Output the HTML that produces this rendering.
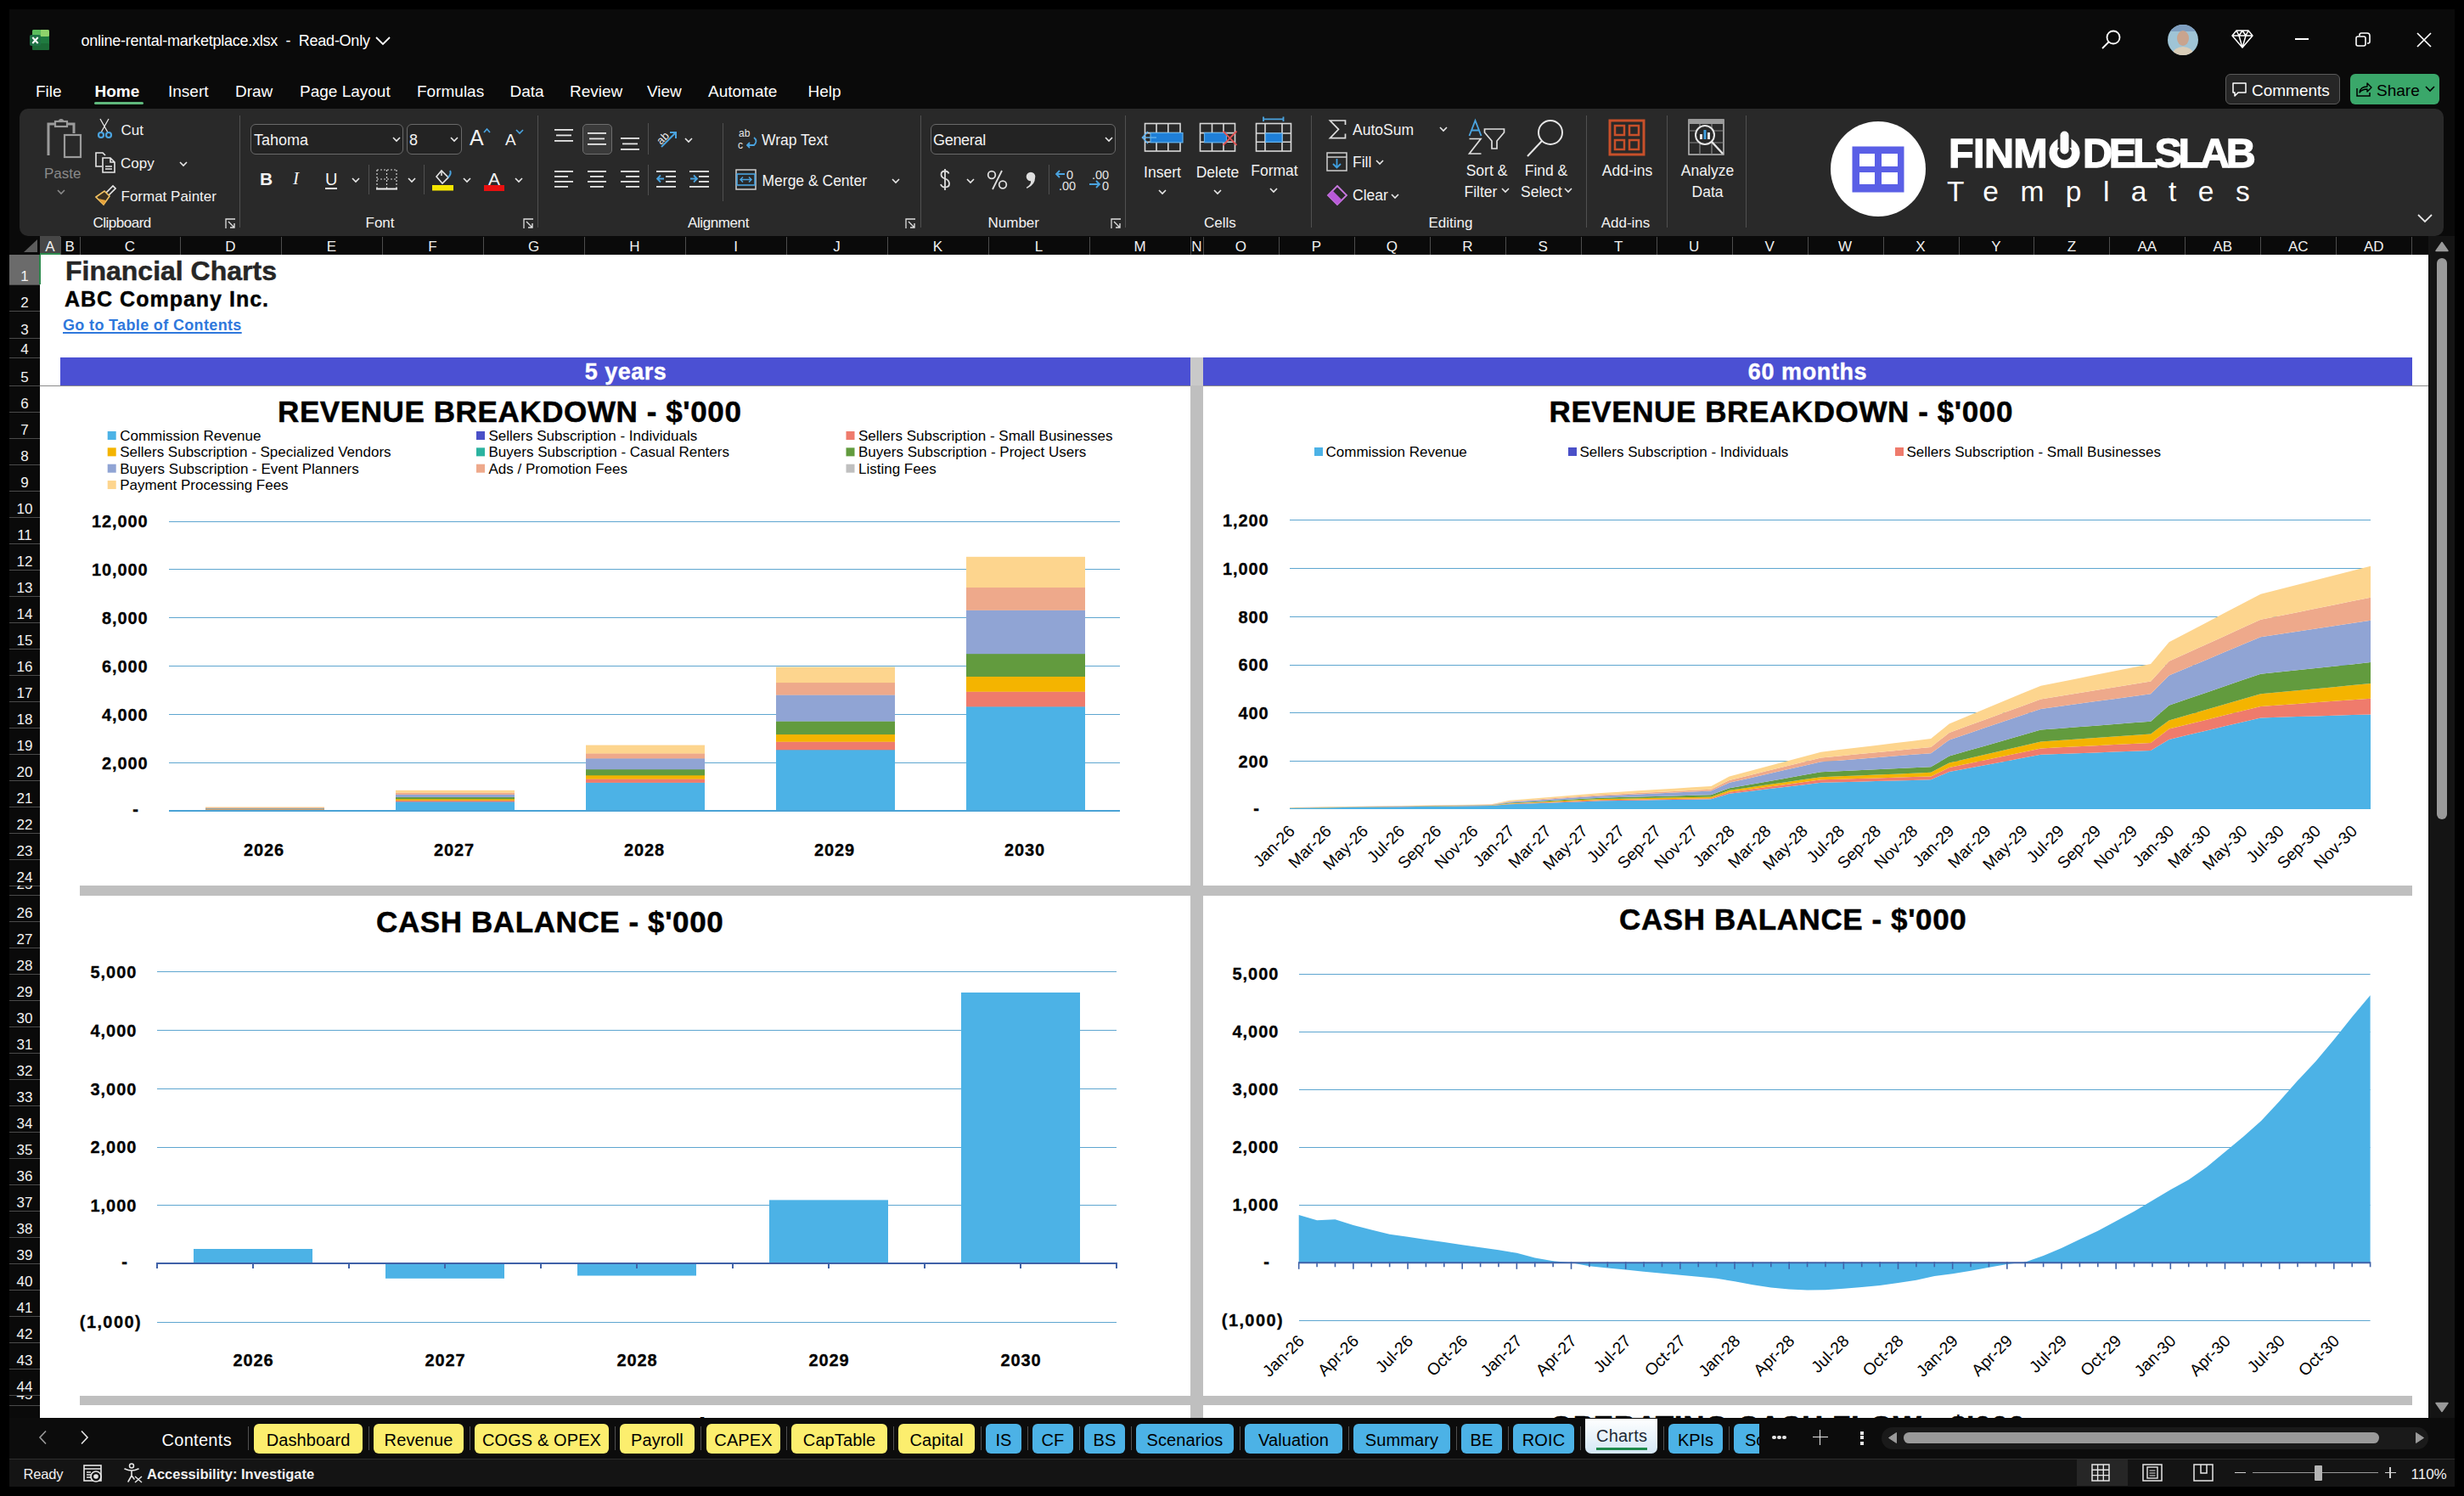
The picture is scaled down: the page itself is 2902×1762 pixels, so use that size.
<!DOCTYPE html><html><head><meta charset="utf-8"><style>
*{box-sizing:border-box}
html,body{margin:0;padding:0}
body{width:2902px;height:1762px;background:#000;position:relative;overflow:hidden;font-family:"Liberation Sans",sans-serif;color:#fff}
.a{position:absolute}
.t{position:absolute;white-space:pre;line-height:1}
</style></head><body><div class="a" style="left:11px;top:11px;width:2880px;height:1740px;background:#0a0a0a"></div>
<svg class="a" style="left:35px;top:35px" width="24" height="24" viewBox="0 0 24 24">
<rect x="3" y="0" width="20" height="24" rx="2" fill="#1f7a3f"/>
<rect x="12" y="0" width="11" height="8" rx="1.5" fill="#8fd36b"/>
<rect x="3" y="0" width="10" height="8" rx="1.5" fill="#5bbd5d"/>
<rect x="3" y="16" width="20" height="8" rx="1.5" fill="#1b6a36"/>
<rect x="0" y="6" width="13" height="13" rx="2" fill="#1e7145"/>
<path d="M3.3 9 L9.7 16 M9.7 9 L3.3 16" stroke="#fff" stroke-width="2"/>
</svg>
<div class="t" style="left:95.5px;top:38.8px;font-size:18px;color:#fff;font-weight:400;letter-spacing:-0.25px">online-rental-marketplace.xlsx&nbsp;&nbsp;-&nbsp;&nbsp;Read-Only</div>
<svg class="a" style="left:441px;top:42px" width="20" height="12"><path d="M2 2 L10 10 L18 2" stroke="#fff" stroke-width="1.8" fill="none"/></svg>
<svg class="a" style="left:2473px;top:34px" width="26" height="26"><circle cx="16" cy="10" r="7.5" stroke="#fff" stroke-width="1.8" fill="none"/><path d="M10.5 15.5 L3 23" stroke="#fff" stroke-width="1.8"/></svg>
<svg class="a" style="left:2553px;top:29px" width="36" height="36" viewBox="0 0 36 36">
<defs><clipPath id="av"><circle cx="18" cy="18" r="18"/></clipPath></defs>
<g clip-path="url(#av)"><rect width="36" height="36" fill="#9fc4d6"/><rect y="0" width="36" height="8" fill="#7f9fc0"/>
<ellipse cx="18" cy="16" rx="7" ry="9" fill="#c9a48e"/><path d="M4 36 Q8 26 18 26 Q28 26 32 36Z" fill="#d9cdb8"/></g></svg>
<svg class="a" style="left:2628px;top:34px" width="26" height="24"><path d="M6 2 H20 L25 8 L13 22 L1 8 Z M1 8 H25 M9 8 L13 22 L17 8 M6 2 L9 8 L13 2 L17 8 L20 2" stroke="#fff" stroke-width="1.5" fill="none" stroke-linejoin="round"/></svg>
<div class="a" style="left:2703px;top:45px;width:16px;height:2px;background:#fff"></div>
<svg class="a" style="left:2774px;top:38px" width="18" height="18"><rect x="1" y="5" width="11" height="11" rx="2" stroke="#fff" stroke-width="1.6" fill="none"/><path d="M5 4 V3 Q5 1 7 1 H14 Q17 1 17 4 V11 Q17 13 15 13 H14" stroke="#fff" stroke-width="1.6" fill="none"/></svg>
<svg class="a" style="left:2846px;top:38px" width="18" height="18"><path d="M1 1 L17 17 M17 1 L1 17" stroke="#fff" stroke-width="1.7"/></svg>
<div class="t" style="left:42px;top:97.9px;font-size:19px;color:#fff;font-weight:400;">File</div>
<div class="t" style="left:111.5px;top:97.9px;font-size:19px;color:#fff;font-weight:700;">Home</div>
<div class="t" style="left:198px;top:97.9px;font-size:19px;color:#fff;font-weight:400;">Insert</div>
<div class="t" style="left:277px;top:97.9px;font-size:19px;color:#fff;font-weight:400;">Draw</div>
<div class="t" style="left:353px;top:97.9px;font-size:19px;color:#fff;font-weight:400;">Page Layout</div>
<div class="t" style="left:491px;top:97.9px;font-size:19px;color:#fff;font-weight:400;">Formulas</div>
<div class="t" style="left:600.5px;top:97.9px;font-size:19px;color:#fff;font-weight:400;">Data</div>
<div class="t" style="left:671px;top:97.9px;font-size:19px;color:#fff;font-weight:400;">Review</div>
<div class="t" style="left:762px;top:97.9px;font-size:19px;color:#fff;font-weight:400;">View</div>
<div class="t" style="left:834px;top:97.9px;font-size:19px;color:#fff;font-weight:400;">Automate</div>
<div class="t" style="left:951.5px;top:97.9px;font-size:19px;color:#fff;font-weight:400;">Help</div>
<div class="a" style="left:111px;top:120px;width:58px;height:3px;background:#5fb87c;border-radius:2px"></div>
<div class="a" style="left:2621px;top:87px;width:135px;height:36px;border:1px solid #5a5a5a;border-radius:6px;background:#262626"></div>
<svg class="a" style="left:2628px;top:96px" width="20" height="20"><path d="M2 2 H17 V13 H8 L4 17 V13 H2 Z" stroke="#fff" stroke-width="1.5" fill="none" stroke-linejoin="round"/></svg>
<div class="t" style="left:2652px;top:96.9px;font-size:19px;color:#fff;font-weight:400;">Comments</div>
<div class="a" style="left:2768px;top:87px;width:105px;height:36px;border-radius:6px;background:#3aa76a"></div>
<svg class="a" style="left:2774px;top:95px" width="20" height="20"><path d="M2 9 V18 H17 V14" stroke="#000" stroke-width="1.5" fill="none"/><path d="M5 14 Q6 7 14 7 V3 L19 8 L14 13 V10 Q8 10 5 14Z" stroke="#000" stroke-width="1.4" fill="none" stroke-linejoin="round"/></svg>
<div class="t" style="left:2799px;top:96.9px;font-size:19px;color:#000;font-weight:400;">Share</div>
<svg class="a" style="left:2856px;top:101px" width="12" height="8"><path d="M1 1 L6 6 L11 1" stroke="#000" stroke-width="1.6" fill="none"/></svg>
<div class="a" style="left:23px;top:128px;width:2855px;height:150px;background:#292929;border-radius:10px"></div>
<svg class="a" style="left:54px;top:140px" width="44" height="48" viewBox="0 0 44 48"><path d="M3 43 V6 H11 M25 6 H33 V17" stroke="#9b9b9b" stroke-width="3" fill="none"/><rect x="11" y="3" width="14" height="6" fill="none" stroke="#9b9b9b" stroke-width="2.2"/><path d="M15 3 Q18 -1 21 3" stroke="#9b9b9b" stroke-width="2" fill="none"/><rect x="22" y="19" width="19" height="26" fill="none" stroke="#9b9b9b" stroke-width="2.2"/></svg>
<div class="t" style="left:52px;top:195.6px;font-size:17px;color:#8a8a8a;font-weight:400;">Paste</div>
<svg class="a" style="left:67px;top:223px" width="10" height="7" viewBox="0 0 10 7"><path d="M1 1 L5 5 L9 1" stroke="#8a8a8a" stroke-width="1.6" fill="none"/></svg>
<svg class="a" style="left:114px;top:139px" width="20" height="26" viewBox="0 0 20 26"><path d="M4 1 L13 17 M14 1 L5 17" stroke="#e6e6e6" stroke-width="1.3"/><circle cx="5" cy="20" r="3" stroke="#4aa3df" stroke-width="2.2" fill="none"/><circle cx="14" cy="20" r="3" stroke="#4aa3df" stroke-width="2.2" fill="none"/></svg>
<div class="t" style="left:142.5px;top:144.6px;font-size:17px;color:#f2f2f2;font-weight:400;">Cut</div>
<svg class="a" style="left:111px;top:178px" width="26" height="26" viewBox="0 0 26 26"><path d="M9 18 H2 V2 H10 L13 5" stroke="#e6e6e6" stroke-width="1.6" fill="none"/><path d="M10 8 H19 L24 13 V25 H10 Z M19 8 V13 H24 M13 18 H21 M13 21 H21" stroke="#e6e6e6" stroke-width="1.6" fill="none"/></svg>
<div class="t" style="left:142px;top:183.6px;font-size:17px;color:#f2f2f2;font-weight:400;">Copy</div>
<svg class="a" style="left:211px;top:190px" width="10" height="7" viewBox="0 0 10 7"><path d="M1 1 L5 5 L9 1" stroke="#e8e8e8" stroke-width="1.6" fill="none"/></svg>
<svg class="a" style="left:111px;top:217px" width="26" height="26" viewBox="0 0 26 26"><path d="M14 10 L22 2 L25 5 L17 13" stroke="#e6e6e6" stroke-width="1.7" fill="none"/><path d="M2 15 L12 8 L18 14 L11 24 Z" stroke="#f0c060" stroke-width="1.6" fill="#3a3020"/><path d="M5 17 L11 24 L14 19 Z" fill="#e8a33a"/></svg>
<div class="t" style="left:142.5px;top:222.6px;font-size:17px;color:#f2f2f2;font-weight:400;">Format Painter</div>
<div class="t" style="left:109.5px;top:253.6px;font-size:17px;color:#f2f2f2;font-weight:400;letter-spacing:-0.5px">Clipboard</div>
<svg class="a" style="left:265px;top:257px" width="13" height="13" viewBox="0 0 13 13"><path d="M1 12 V1 H12" stroke="#ddd" stroke-width="1.3" fill="none"/><path d="M4 4 L11 11 M6 11 H11 V6" stroke="#ddd" stroke-width="1.4" fill="none"/></svg>
<div class="a" style="left:282px;top:136px;width:1px;height:132px;background:#505050"></div>
<div class="a" style="left:295px;top:146px;width:180px;height:36px;border:1px solid #6a6a6a;border-radius:6px;background:#232323"></div>
<div class="t" style="left:299px;top:155.8px;font-size:18px;color:#f2f2f2;font-weight:400;">Tahoma</div>
<svg class="a" style="left:462px;top:161px" width="10" height="7" viewBox="0 0 10 7"><path d="M1 1 L5 5 L9 1" stroke="#e8e8e8" stroke-width="1.6" fill="none"/></svg>
<div class="a" style="left:479px;top:146px;width:65px;height:36px;border:1px solid #6a6a6a;border-radius:6px;background:#232323"></div>
<div class="t" style="left:482px;top:155.8px;font-size:18px;color:#f2f2f2;font-weight:400;">8</div>
<svg class="a" style="left:530px;top:161px" width="10" height="7" viewBox="0 0 10 7"><path d="M1 1 L5 5 L9 1" stroke="#e8e8e8" stroke-width="1.6" fill="none"/></svg>
<div class="t" style="left:553px;top:149.8px;font-size:25px;color:#f2f2f2;font-weight:400;">A</div>
<svg class="a" style="left:569px;top:150px" width="9" height="7" viewBox="0 0 9 7"><path d="M1 6 L4.5 2 L8 6" stroke="#4aa3df" stroke-width="1.7" fill="none"/></svg>
<div class="t" style="left:595px;top:154.9px;font-size:19px;color:#f2f2f2;font-weight:400;">A</div>
<svg class="a" style="left:607px;top:152px" width="10" height="7" viewBox="0 0 10 7"><path d="M1 1 L5 5 L9 1" stroke="#4aa3df" stroke-width="1.7" fill="none"/></svg>
<div class="t" style="left:306px;top:200.2px;font-size:21px;color:#f2f2f2;font-weight:700;">B</div>
<div class="t" style="left:345px;top:200.2px;font-size:21px;color:#f2f2f2;font-weight:400;font-style:italic;font-family:'Liberation Serif'">I</div>
<div class="t" style="left:383px;top:201.1px;font-size:20px;color:#f2f2f2;font-weight:400;">U</div>
<div class="a" style="left:383px;top:221px;width:14px;height:1.5px;background:#f2f2f2"></div>
<svg class="a" style="left:414px;top:209px" width="10" height="7" viewBox="0 0 10 7"><path d="M1 1 L5 5 L9 1" stroke="#e8e8e8" stroke-width="1.6" fill="none"/></svg>
<div class="a" style="left:434px;top:194px;width:1px;height:35px;background:#505050"></div>
<svg class="a" style="left:443px;top:199px" width="25" height="25" viewBox="0 0 25 25"><path d="M1 1 H24 M1 12 H24 M1 1 V24 M24 1 V24 M12.5 1 V24" stroke="#cfcfcf" stroke-width="1.2" stroke-dasharray="2 2" fill="none"/><path d="M0 23.5 H25" stroke="#f0f0f0" stroke-width="2"/></svg>
<svg class="a" style="left:480px;top:209px" width="10" height="7" viewBox="0 0 10 7"><path d="M1 1 L5 5 L9 1" stroke="#e8e8e8" stroke-width="1.6" fill="none"/></svg>
<div class="a" style="left:499px;top:194px;width:1px;height:35px;background:#505050"></div>
<svg class="a" style="left:509px;top:198px" width="25" height="27" viewBox="0 0 25 27"><path d="M5 10 L11 3 L19 11 L12 18 Z" stroke="#e6e6e6" stroke-width="1.6" fill="none"/><path d="M11 3 V9" stroke="#e6e6e6" stroke-width="1.5"/><path d="M19 11 Q23 6 21 3" stroke="#4aa3df" stroke-width="2" fill="none"/><rect x="0" y="20" width="25" height="6.5" fill="#f5e600"/></svg>
<svg class="a" style="left:545px;top:209px" width="10" height="7" viewBox="0 0 10 7"><path d="M1 1 L5 5 L9 1" stroke="#e8e8e8" stroke-width="1.6" fill="none"/></svg>
<div class="t" style="left:575px;top:200.2px;font-size:21px;color:#f2f2f2;font-weight:400;">A</div>
<div class="a" style="left:570px;top:218px;width:24px;height:6.5px;background:#e81010"></div>
<svg class="a" style="left:606px;top:209px" width="10" height="7" viewBox="0 0 10 7"><path d="M1 1 L5 5 L9 1" stroke="#e8e8e8" stroke-width="1.6" fill="none"/></svg>
<div class="t" style="left:430.5px;top:253.6px;font-size:17px;color:#f2f2f2;font-weight:400;">Font</div>
<svg class="a" style="left:616px;top:257px" width="13" height="13" viewBox="0 0 13 13"><path d="M1 12 V1 H12" stroke="#ddd" stroke-width="1.3" fill="none"/><path d="M4 4 L11 11 M6 11 H11 V6" stroke="#ddd" stroke-width="1.4" fill="none"/></svg>
<div class="a" style="left:633px;top:136px;width:1px;height:132px;background:#505050"></div>
<svg class="a" style="left:653px;top:150px" width="23" height="18" viewBox="0 0 23 18"><rect x="0" y="2" width="22" height="1.8" fill="#e6e6e6"/><rect x="2" y="8.5" width="18" height="1.8" fill="#e6e6e6"/><rect x="0" y="15" width="22" height="1.8" fill="#e6e6e6"/></svg>
<div class="a" style="left:686px;top:146px;width:35px;height:36px;border:1px solid #6e6e6e;border-radius:5px;background:#3a3a3a"></div>
<svg class="a" style="left:692px;top:155px" width="23" height="18" viewBox="0 0 23 18"><rect x="0" y="1" width="22" height="1.8" fill="#e6e6e6"/><rect x="2" y="7.5" width="18" height="1.8" fill="#e6e6e6"/><rect x="0" y="14" width="22" height="1.8" fill="#e6e6e6"/></svg>
<svg class="a" style="left:731px;top:161px" width="23" height="18" viewBox="0 0 23 18"><rect x="0" y="1" width="22" height="1.8" fill="#e6e6e6"/><rect x="2" y="7.5" width="18" height="1.8" fill="#e6e6e6"/><rect x="0" y="14" width="22" height="1.8" fill="#e6e6e6"/></svg>
<div class="a" style="left:763px;top:145px;width:1px;height:37px;background:#505050"></div>
<svg class="a" style="left:771px;top:149px" width="28" height="28" viewBox="0 0 28 28"><text x="1" y="18" font-size="13" fill="#e6e6e6" font-family="Liberation Sans" transform="rotate(-45 9 12)">ab</text><path d="M8 24 L25 7 M18 7 H25 V14" stroke="#4aa3df" stroke-width="2" fill="none"/></svg>
<svg class="a" style="left:806px;top:162px" width="10" height="7" viewBox="0 0 10 7"><path d="M1 1 L5 5 L9 1" stroke="#e8e8e8" stroke-width="1.6" fill="none"/></svg>
<div class="a" style="left:851px;top:145px;width:1px;height:92px;background:#505050"></div>
<svg class="a" style="left:869px;top:150px" width="25" height="28" viewBox="0 0 25 28"><text x="1" y="11" font-size="12" fill="#e6e6e6" font-family="Liberation Sans">ab</text><text x="0" y="25" font-size="12" fill="#e6e6e6" font-family="Liberation Sans">c</text><path d="M19 12 Q24 16 19 21 H11 M14 18 L11 21 L14 24" stroke="#4aa3df" stroke-width="1.8" fill="none"/></svg>
<div class="t" style="left:897px;top:157.2px;font-size:17.5px;color:#f2f2f2;font-weight:400;">Wrap Text</div>
<svg class="a" style="left:653px;top:200px" width="23" height="24" viewBox="0 0 23 24"><rect x="0" y="1" width="22" height="1.8" fill="#e6e6e6"/><rect x="0" y="7" width="16" height="1.8" fill="#e6e6e6"/><rect x="0" y="13" width="22" height="1.8" fill="#e6e6e6"/><rect x="0" y="19" width="16" height="1.8" fill="#e6e6e6"/></svg>
<svg class="a" style="left:692px;top:200px" width="23" height="24" viewBox="0 0 23 24"><rect x="0" y="1" width="22" height="1.8" fill="#e6e6e6"/><rect x="3" y="7" width="16" height="1.8" fill="#e6e6e6"/><rect x="0" y="13" width="22" height="1.8" fill="#e6e6e6"/><rect x="3" y="19" width="16" height="1.8" fill="#e6e6e6"/></svg>
<svg class="a" style="left:731px;top:200px" width="23" height="24" viewBox="0 0 23 24"><rect x="0" y="1" width="22" height="1.8" fill="#e6e6e6"/><rect x="6" y="7" width="16" height="1.8" fill="#e6e6e6"/><rect x="0" y="13" width="22" height="1.8" fill="#e6e6e6"/><rect x="6" y="19" width="16" height="1.8" fill="#e6e6e6"/></svg>
<div class="a" style="left:763px;top:194px;width:1px;height:36px;background:#505050"></div>
<svg class="a" style="left:773px;top:200px" width="24" height="24" viewBox="0 0 24 24"><rect x="0" y="1" width="23" height="1.8" fill="#e6e6e6"/><rect x="0" y="19" width="23" height="1.8" fill="#e6e6e6"/><rect x="11" y="7" width="12" height="1.8" fill="#e6e6e6"/><rect x="11" y="13" width="12" height="1.8" fill="#e6e6e6"/><path d="M9 10.5 H1 M5 6.5 L1 10.5 L5 14.5" stroke="#4aa3df" stroke-width="1.8" fill="none"/></svg>
<svg class="a" style="left:812px;top:200px" width="24" height="24" viewBox="0 0 24 24"><rect x="0" y="1" width="23" height="1.8" fill="#e6e6e6"/><rect x="0" y="19" width="23" height="1.8" fill="#e6e6e6"/><rect x="11" y="7" width="12" height="1.8" fill="#e6e6e6"/><rect x="11" y="13" width="12" height="1.8" fill="#e6e6e6"/><path d="M1 10.5 H9 M5 6.5 L9 10.5 L5 14.5" stroke="#4aa3df" stroke-width="1.8" fill="none"/></svg>
<svg class="a" style="left:866px;top:199px" width="25" height="25" viewBox="0 0 25 25"><rect x="1" y="1" width="23" height="23" stroke="#cfcfcf" stroke-width="1.5" fill="none"/><rect x="2" y="6" width="21" height="13" stroke="#4aa3df" stroke-width="1.6" fill="none"/><path d="M6 12.5 H19 M9 9.5 L6 12.5 L9 15.5 M16 9.5 L19 12.5 L16 15.5" stroke="#4aa3df" stroke-width="1.5" fill="none"/></svg>
<div class="t" style="left:897.5px;top:204.7px;font-size:17.5px;color:#f2f2f2;font-weight:400;">Merge &amp; Center</div>
<svg class="a" style="left:1050px;top:210px" width="10" height="7" viewBox="0 0 10 7"><path d="M1 1 L5 5 L9 1" stroke="#e8e8e8" stroke-width="1.6" fill="none"/></svg>
<div class="t" style="left:810px;top:253.6px;font-size:17px;color:#f2f2f2;font-weight:400;letter-spacing:-0.4px">Alignment</div>
<svg class="a" style="left:1066px;top:257px" width="13" height="13" viewBox="0 0 13 13"><path d="M1 12 V1 H12" stroke="#ddd" stroke-width="1.3" fill="none"/><path d="M4 4 L11 11 M6 11 H11 V6" stroke="#ddd" stroke-width="1.4" fill="none"/></svg>
<div class="a" style="left:1084px;top:136px;width:1px;height:132px;background:#505050"></div>
<div class="a" style="left:1096px;top:146px;width:218px;height:36px;border:1px solid #6a6a6a;border-radius:6px;background:#232323"></div>
<div class="t" style="left:1099px;top:155.8px;font-size:18px;color:#f2f2f2;font-weight:400;letter-spacing:-0.3px">General</div>
<svg class="a" style="left:1301px;top:161px" width="10" height="7" viewBox="0 0 10 7"><path d="M1 1 L5 5 L9 1" stroke="#e8e8e8" stroke-width="1.6" fill="none"/></svg>
<svg class="a" style="left:1105px;top:198px" width="16" height="28" viewBox="0 0 16 28"><path d="M12.5 6.5 Q11.5 3.5 8 3.5 Q3.5 3.5 3.5 7.5 Q3.5 11 8 12.5 Q13 14 13 18.5 Q13 22.5 8 22.5 Q4 22.5 3 19" stroke="#dedede" stroke-width="1.8" fill="none"/><path d="M8 1 V26" stroke="#dedede" stroke-width="1.8"/></svg>
<svg class="a" style="left:1138px;top:210px" width="10" height="7" viewBox="0 0 10 7"><path d="M1 1 L5 5 L9 1" stroke="#e8e8e8" stroke-width="1.6" fill="none"/></svg>
<svg class="a" style="left:1162px;top:200px" width="26" height="24" viewBox="0 0 26 24"><circle cx="6" cy="6" r="4.3" stroke="#dedede" stroke-width="1.8" fill="none"/><circle cx="19" cy="17.5" r="4.3" stroke="#dedede" stroke-width="1.8" fill="none"/><path d="M18 1 L7 23" stroke="#dedede" stroke-width="1.8"/></svg>
<svg class="a" style="left:1207px;top:202px" width="14" height="21" viewBox="0 0 14 21"><circle cx="7" cy="6" r="5.3" fill="#dedede"/><path d="M12 6.5 Q12.5 15.5 2.5 20 L1.8 18.8 Q8 15 7 10.5 Z" fill="#dedede"/></svg>
<div class="a" style="left:1235px;top:194px;width:1px;height:35px;background:#505050"></div>
<svg class="a" style="left:1243px;top:199px" width="27" height="26" viewBox="0 0 27 26"><text x="13" y="12" font-size="14.5" fill="#e6e6e6" font-family="Liberation Sans">0</text><text x="4" y="25" font-size="14.5" fill="#e6e6e6" font-family="Liberation Sans">.00</text><path d="M11 6 H1 M5 2 L1 6 L5 10" stroke="#4aa3df" stroke-width="1.8" fill="none"/></svg>
<svg class="a" style="left:1282px;top:199px" width="27" height="26" viewBox="0 0 27 26"><text x="4" y="12" font-size="14.5" fill="#e6e6e6" font-family="Liberation Sans">.00</text><text x="16" y="25" font-size="14.5" fill="#e6e6e6" font-family="Liberation Sans">0</text><path d="M1 18 H13 M9 14 L13 18 L9 22" stroke="#4aa3df" stroke-width="1.8" fill="none"/></svg>
<div class="t" style="left:1163.5px;top:253.6px;font-size:17px;color:#f2f2f2;font-weight:400;">Number</div>
<svg class="a" style="left:1308px;top:257px" width="13" height="13" viewBox="0 0 13 13"><path d="M1 12 V1 H12" stroke="#ddd" stroke-width="1.3" fill="none"/><path d="M4 4 L11 11 M6 11 H11 V6" stroke="#ddd" stroke-width="1.4" fill="none"/></svg>
<div class="a" style="left:1325px;top:136px;width:1px;height:132px;background:#505050"></div>
<svg class="a" style="left:1340px;top:135px" width="60" height="50" viewBox="1340 135 60 50"><rect x="1348.5" y="145.5" width="41.5" height="32.5" stroke="#d9d9d9" stroke-width="1.6" fill="none"/><path d="M1362 145.5 V178" stroke="#d9d9d9" stroke-width="1.6"/><path d="M1375.8 145.5 V178" stroke="#d9d9d9" stroke-width="1.6"/><path d="M1348.5 156.6 H1390" stroke="#d9d9d9" stroke-width="1.6"/><path d="M1348.5 167.3 H1390" stroke="#d9d9d9" stroke-width="1.6"/><rect x="1355" y="156.5" width="38" height="11.3" fill="#1e7fd8" stroke="#5fb0ec" stroke-width="1.2"/><path d="M1362 162 H1346 M1352 155 L1345.5 162 L1352 169" stroke="#5fb0ec" stroke-width="1.6" fill="none"/></svg>
<svg class="a" style="left:1405px;top:135px" width="60" height="50" viewBox="1405 135 60 50"><rect x="1413.5" y="145.5" width="41.0" height="32.5" stroke="#d9d9d9" stroke-width="1.6" fill="none"/><path d="M1427.5 145.5 V178" stroke="#d9d9d9" stroke-width="1.6"/><path d="M1441 145.5 V178" stroke="#d9d9d9" stroke-width="1.6"/><path d="M1413.5 156.6 H1454.5" stroke="#d9d9d9" stroke-width="1.6"/><path d="M1413.5 167.3 H1454.5" stroke="#d9d9d9" stroke-width="1.6"/><rect x="1418.5" y="156.5" width="26" height="11.3" fill="#1e7fd8" stroke="#5fb0ec" stroke-width="1.2"/><path d="M1440.5 154.5 L1456.5 171 M1456.5 154.5 L1440.5 171" stroke="#e05555" stroke-width="1.8"/></svg>
<svg class="a" style="left:1470px;top:135px" width="60" height="50" viewBox="1470 135 60 50"><rect x="1479.5" y="145.5" width="41.0" height="32.5" stroke="#d9d9d9" stroke-width="1.6" fill="none"/><path d="M1490 145.5 V178" stroke="#d9d9d9" stroke-width="1.6"/><path d="M1510 145.5 V178" stroke="#d9d9d9" stroke-width="1.6"/><path d="M1479.5 157 H1520.5" stroke="#d9d9d9" stroke-width="1.6"/><path d="M1479.5 167.3 H1520.5" stroke="#d9d9d9" stroke-width="1.6"/><rect x="1490.5" y="157" width="19.5" height="10.3" fill="#1e7fd8" stroke="#5fb0ec" stroke-width="1.2"/><path d="M1488 140.3 H1511.5 M1488 137.5 V143 M1511.5 137.5 V143" stroke="#4aa3df" stroke-width="1.8"/></svg>
<div class="t" style="left:869px;width:1000px;text-align:center;top:195.2px;font-size:17.5px;color:#f2f2f2;font-weight:400;">Insert</div>
<svg class="a" style="left:1364px;top:223px" width="10" height="7" viewBox="0 0 10 7"><path d="M1 1 L5 5 L9 1" stroke="#e8e8e8" stroke-width="1.6" fill="none"/></svg>
<div class="t" style="left:934px;width:1000px;text-align:center;top:195.2px;font-size:17.5px;color:#f2f2f2;font-weight:400;">Delete</div>
<svg class="a" style="left:1429px;top:223px" width="10" height="7" viewBox="0 0 10 7"><path d="M1 1 L5 5 L9 1" stroke="#e8e8e8" stroke-width="1.6" fill="none"/></svg>
<div class="t" style="left:1001px;width:1000px;text-align:center;top:193.2px;font-size:17.5px;color:#f2f2f2;font-weight:400;">Format</div>
<svg class="a" style="left:1495px;top:221px" width="10" height="7" viewBox="0 0 10 7"><path d="M1 1 L5 5 L9 1" stroke="#e8e8e8" stroke-width="1.6" fill="none"/></svg>
<div class="t" style="left:1418px;top:254.1px;font-size:17px;color:#f2f2f2;font-weight:400;">Cells</div>
<div class="a" style="left:1544px;top:136px;width:1px;height:132px;background:#505050"></div>
<svg class="a" style="left:1560px;top:136px" width="30" height="32" viewBox="1560 136 30 32"><path d="M1584.5 147 V142 H1566.5 L1576.5 152.3 L1566.5 162.7 H1584.5 V157.5" stroke="#dedede" stroke-width="1.7" fill="none" stroke-linejoin="miter"/></svg>
<div class="t" style="left:1593px;top:145.2px;font-size:17.5px;color:#f2f2f2;font-weight:400;">AutoSum</div>
<svg class="a" style="left:1695px;top:149px" width="10" height="7" viewBox="0 0 10 7"><path d="M1 1 L5 5 L9 1" stroke="#e8e8e8" stroke-width="1.6" fill="none"/></svg>
<svg class="a" style="left:1562px;top:179px" width="26" height="24" viewBox="0 0 26 24"><rect x="1" y="1" width="23" height="21" stroke="#cfcfcf" stroke-width="1.5" fill="none"/><path d="M1 6 H24" stroke="#cfcfcf" stroke-width="1.5"/><path d="M12.5 8 V18 M8 14 L12.5 18.5 L17 14" stroke="#3f9fe0" stroke-width="1.8" fill="none"/></svg>
<div class="t" style="left:1593px;top:183.2px;font-size:17.5px;color:#f2f2f2;font-weight:400;">Fill</div>
<svg class="a" style="left:1620px;top:188px" width="10" height="7" viewBox="0 0 10 7"><path d="M1 1 L5 5 L9 1" stroke="#e8e8e8" stroke-width="1.6" fill="none"/></svg>
<svg class="a" style="left:1562px;top:217px" width="26" height="26" viewBox="0 0 26 26"><path d="M13 2 L24 13 L13 24 L2 13 Z" stroke="#c878e0" stroke-width="1.8" fill="none"/><path d="M2 13 L7.5 7.5 L18.5 18.5 L13 24 Z" fill="#b85ad8"/></svg>
<div class="t" style="left:1593px;top:222.2px;font-size:17.5px;color:#f2f2f2;font-weight:400;">Clear</div>
<svg class="a" style="left:1638px;top:228px" width="10" height="7" viewBox="0 0 10 7"><path d="M1 1 L5 5 L9 1" stroke="#e8e8e8" stroke-width="1.6" fill="none"/></svg>
<svg class="a" style="left:1725px;top:138px" width="52" height="48" viewBox="1725 138 52 48"><path d="M1730.5 160 L1737.5 142 L1744.5 160 M1733 153.5 H1742" stroke="#4aa3df" stroke-width="1.9" fill="none"/><path d="M1730.5 163.5 H1744 L1730.5 181 H1744.5" stroke="#dedede" stroke-width="1.7" fill="none"/><path d="M1748.5 152 H1771.5 V156 L1763 166 V175 H1757 V166 L1748.5 156 Z" stroke="#dedede" stroke-width="1.7" fill="none"/></svg>
<div class="t" style="left:1251px;width:1000px;text-align:center;top:193.2px;font-size:17.5px;color:#f2f2f2;font-weight:400;">Sort &amp;</div>
<div class="t" style="left:1724.5px;top:217.7px;font-size:17.5px;color:#f2f2f2;font-weight:400;">Filter</div>
<svg class="a" style="left:1768px;top:221px" width="10" height="7" viewBox="0 0 10 7"><path d="M1 1 L5 5 L9 1" stroke="#e8e8e8" stroke-width="1.6" fill="none"/></svg>
<svg class="a" style="left:1797px;top:139px" width="47" height="47" viewBox="0 0 47 47"><circle cx="29" cy="17" r="14" stroke="#e6e6e6" stroke-width="2" fill="none"/><path d="M19 27 L2 45" stroke="#e6e6e6" stroke-width="2"/></svg>
<div class="t" style="left:1321px;width:1000px;text-align:center;top:193.2px;font-size:17.5px;color:#f2f2f2;font-weight:400;">Find &amp;</div>
<div class="t" style="left:1791px;top:217.7px;font-size:17.5px;color:#f2f2f2;font-weight:400;">Select</div>
<svg class="a" style="left:1842px;top:221px" width="10" height="7" viewBox="0 0 10 7"><path d="M1 1 L5 5 L9 1" stroke="#e8e8e8" stroke-width="1.6" fill="none"/></svg>
<div class="t" style="left:1682.5px;top:254.1px;font-size:17px;color:#f2f2f2;font-weight:400;">Editing</div>
<div class="a" style="left:1868px;top:136px;width:1px;height:132px;background:#505050"></div>
<svg class="a" style="left:1894px;top:140px" width="44" height="44" viewBox="0 0 44 44"><rect x="2" y="2" width="40" height="40" stroke="#c8502a" stroke-width="3" fill="none"/><rect x="8" y="8" width="11" height="11" stroke="#c8502a" stroke-width="2.5" fill="none"/><rect x="25" y="8" width="11" height="11" stroke="#c8502a" stroke-width="2.5" fill="none"/><rect x="8" y="25" width="11" height="11" stroke="#c8502a" stroke-width="2.5" fill="none"/><rect x="25" y="25" width="11" height="11" stroke="#c8502a" stroke-width="2.5" fill="none"/></svg>
<div class="t" style="left:1416.5px;width:1000px;text-align:center;top:193.2px;font-size:17.5px;color:#f2f2f2;font-weight:400;">Add-ins</div>
<div class="t" style="left:1414.5px;width:1000px;text-align:center;top:254.1px;font-size:17px;color:#f2f2f2;font-weight:400;">Add-ins</div>
<div class="a" style="left:1963px;top:136px;width:1px;height:132px;background:#505050"></div>
<svg class="a" style="left:1988px;top:140px" width="44" height="44" viewBox="0 0 44 44"><rect x="1" y="1" width="41" height="41" stroke="#bdbdbd" stroke-width="1.5" fill="none"/><rect x="1" y="1" width="41" height="5" fill="#9a9a9a"/><path d="M1 14 H42 M1 28 H42 M14 6 V42 M28 6 V42" stroke="#8a8a8a" stroke-width="1.2"/><circle cx="20" cy="19" r="11" fill="#292929" stroke="#e6e6e6" stroke-width="2"/><rect x="14" y="18" width="3" height="6" fill="#e6e6e6"/><rect x="18.5" y="13" width="3" height="11" fill="#3f9fe0"/><rect x="23" y="16" width="3" height="8" fill="#e6e6e6"/><path d="M28 27 L41 41" stroke="#e6e6e6" stroke-width="2.4"/></svg>
<div class="t" style="left:1511px;width:1000px;text-align:center;top:193.2px;font-size:17.5px;color:#f2f2f2;font-weight:400;">Analyze</div>
<div class="t" style="left:1511px;width:1000px;text-align:center;top:217.7px;font-size:17.5px;color:#f2f2f2;font-weight:400;">Data</div>
<div class="a" style="left:2056px;top:136px;width:1px;height:132px;background:#505050"></div>
<div class="a" style="left:2156px;top:143px;width:112px;height:112px;border-radius:50%;background:#fff"></div>
<svg class="a" style="left:2181px;top:172px" width="62" height="55" viewBox="0 0 62 55"><rect x="0.5" y="0.5" width="61" height="54" fill="#5a5fe6"/><rect x="9" y="9" width="18" height="15" fill="#fff"/><rect x="35" y="9" width="19" height="15" fill="#fff"/><rect x="9" y="31" width="18" height="14" fill="#fff"/><rect x="35" y="31" width="19" height="14" fill="#fff"/></svg>
<div class="t" style="left:2295px;top:156.4px;font-size:48.5px;color:#fff;font-weight:700;letter-spacing:-0.6px;-webkit-text-stroke:1.3px #fff">FINM</div>
<div class="t" style="left:2453px;top:156.4px;font-size:48.5px;color:#fff;font-weight:700;letter-spacing:-4.2px;-webkit-text-stroke:1.3px #fff">DELSLAB</div>
<svg class="a" style="left:2411px;top:152px" width="42" height="48" viewBox="0 0 42 48"><circle cx="20.5" cy="28" r="13.3" stroke="#fff" stroke-width="9.6" fill="none"/><rect x="12.5" y="6" width="16" height="16" fill="#292929"/><rect x="15.5" y="2.5" width="10" height="27" rx="5" fill="#fff"/></svg>
<div class="t" style="left:2293px;top:209.1px;font-size:33.5px;color:#fff;font-weight:400;letter-spacing:25.5px">Templates</div>
<svg class="a" style="left:2847px;top:252px" width="18" height="11" viewBox="0 0 18 11"><path d="M1 1 L9 9 L17 1" stroke="#e6e6e6" stroke-width="1.8" fill="none"/></svg>
<div class="a" style="left:11px;top:278px;width:2849px;height:22px;background:#0a0a0a"></div>
<svg class="a" style="left:28px;top:282px" width="17" height="16" viewBox="0 0 17 16"><path d="M16 0 V15 H0 Z" fill="#5c5c5c"/></svg>
<div class="a" style="left:47px;top:278px;width:23.6px;height:22px;background:#474747"></div>
<div class="t" style="left:-441.2px;width:1000px;text-align:center;top:281.6px;font-size:17px;color:#f0f0f0;font-weight:400;">A</div>
<div class="a" style="left:70.6px;top:279px;width:1px;height:21px;background:#4d4d4d"></div>
<div class="t" style="left:-417.9px;width:1000px;text-align:center;top:281.6px;font-size:17px;color:#f0f0f0;font-weight:400;">B</div>
<div class="a" style="left:93.6px;top:279px;width:1px;height:21px;background:#4d4d4d"></div>
<div class="t" style="left:-347.2px;width:1000px;text-align:center;top:281.6px;font-size:17px;color:#f0f0f0;font-weight:400;">C</div>
<div class="a" style="left:212px;top:279px;width:1px;height:21px;background:#4d4d4d"></div>
<div class="t" style="left:-228.5px;width:1000px;text-align:center;top:281.6px;font-size:17px;color:#f0f0f0;font-weight:400;">D</div>
<div class="a" style="left:331px;top:279px;width:1px;height:21px;background:#4d4d4d"></div>
<div class="t" style="left:-109.5px;width:1000px;text-align:center;top:281.6px;font-size:17px;color:#f0f0f0;font-weight:400;">E</div>
<div class="a" style="left:450px;top:279px;width:1px;height:21px;background:#4d4d4d"></div>
<div class="t" style="left:9.5px;width:1000px;text-align:center;top:281.6px;font-size:17px;color:#f0f0f0;font-weight:400;">F</div>
<div class="a" style="left:569px;top:279px;width:1px;height:21px;background:#4d4d4d"></div>
<div class="t" style="left:128.5px;width:1000px;text-align:center;top:281.6px;font-size:17px;color:#f0f0f0;font-weight:400;">G</div>
<div class="a" style="left:688px;top:279px;width:1px;height:21px;background:#4d4d4d"></div>
<div class="t" style="left:247.5px;width:1000px;text-align:center;top:281.6px;font-size:17px;color:#f0f0f0;font-weight:400;">H</div>
<div class="a" style="left:807px;top:279px;width:1px;height:21px;background:#4d4d4d"></div>
<div class="t" style="left:366.5px;width:1000px;text-align:center;top:281.6px;font-size:17px;color:#f0f0f0;font-weight:400;">I</div>
<div class="a" style="left:926px;top:279px;width:1px;height:21px;background:#4d4d4d"></div>
<div class="t" style="left:485.5px;width:1000px;text-align:center;top:281.6px;font-size:17px;color:#f0f0f0;font-weight:400;">J</div>
<div class="a" style="left:1045px;top:279px;width:1px;height:21px;background:#4d4d4d"></div>
<div class="t" style="left:604.5px;width:1000px;text-align:center;top:281.6px;font-size:17px;color:#f0f0f0;font-weight:400;">K</div>
<div class="a" style="left:1164px;top:279px;width:1px;height:21px;background:#4d4d4d"></div>
<div class="t" style="left:723.5px;width:1000px;text-align:center;top:281.6px;font-size:17px;color:#f0f0f0;font-weight:400;">L</div>
<div class="a" style="left:1283px;top:279px;width:1px;height:21px;background:#4d4d4d"></div>
<div class="t" style="left:842.5px;width:1000px;text-align:center;top:281.6px;font-size:17px;color:#f0f0f0;font-weight:400;">M</div>
<div class="a" style="left:1402px;top:279px;width:1px;height:21px;background:#4d4d4d"></div>
<div class="t" style="left:909.5px;width:1000px;text-align:center;top:281.6px;font-size:17px;color:#f0f0f0;font-weight:400;">N</div>
<div class="a" style="left:1417px;top:279px;width:1px;height:21px;background:#4d4d4d"></div>
<div class="t" style="left:961.4749999999999px;width:1000px;text-align:center;top:281.6px;font-size:17px;color:#f0f0f0;font-weight:400;">O</div>
<div class="a" style="left:1505.95px;top:279px;width:1px;height:21px;background:#4d4d4d"></div>
<div class="t" style="left:1050.4250000000002px;width:1000px;text-align:center;top:281.6px;font-size:17px;color:#f0f0f0;font-weight:400;">P</div>
<div class="a" style="left:1594.9px;top:279px;width:1px;height:21px;background:#4d4d4d"></div>
<div class="t" style="left:1139.375px;width:1000px;text-align:center;top:281.6px;font-size:17px;color:#f0f0f0;font-weight:400;">Q</div>
<div class="a" style="left:1683.8500000000001px;top:279px;width:1px;height:21px;background:#4d4d4d"></div>
<div class="t" style="left:1228.3250000000003px;width:1000px;text-align:center;top:281.6px;font-size:17px;color:#f0f0f0;font-weight:400;">R</div>
<div class="a" style="left:1772.8000000000002px;top:279px;width:1px;height:21px;background:#4d4d4d"></div>
<div class="t" style="left:1317.275px;width:1000px;text-align:center;top:281.6px;font-size:17px;color:#f0f0f0;font-weight:400;">S</div>
<div class="a" style="left:1861.7500000000002px;top:279px;width:1px;height:21px;background:#4d4d4d"></div>
<div class="t" style="left:1406.2250000000004px;width:1000px;text-align:center;top:281.6px;font-size:17px;color:#f0f0f0;font-weight:400;">T</div>
<div class="a" style="left:1950.7000000000003px;top:279px;width:1px;height:21px;background:#4d4d4d"></div>
<div class="t" style="left:1495.1750000000002px;width:1000px;text-align:center;top:281.6px;font-size:17px;color:#f0f0f0;font-weight:400;">U</div>
<div class="a" style="left:2039.6500000000003px;top:279px;width:1px;height:21px;background:#4d4d4d"></div>
<div class="t" style="left:1584.1250000000005px;width:1000px;text-align:center;top:281.6px;font-size:17px;color:#f0f0f0;font-weight:400;">V</div>
<div class="a" style="left:2128.6000000000004px;top:279px;width:1px;height:21px;background:#4d4d4d"></div>
<div class="t" style="left:1673.0750000000003px;width:1000px;text-align:center;top:281.6px;font-size:17px;color:#f0f0f0;font-weight:400;">W</div>
<div class="a" style="left:2217.55px;top:279px;width:1px;height:21px;background:#4d4d4d"></div>
<div class="t" style="left:1762.025px;width:1000px;text-align:center;top:281.6px;font-size:17px;color:#f0f0f0;font-weight:400;">X</div>
<div class="a" style="left:2306.5px;top:279px;width:1px;height:21px;background:#4d4d4d"></div>
<div class="t" style="left:1850.975px;width:1000px;text-align:center;top:281.6px;font-size:17px;color:#f0f0f0;font-weight:400;">Y</div>
<div class="a" style="left:2395.45px;top:279px;width:1px;height:21px;background:#4d4d4d"></div>
<div class="t" style="left:1939.9249999999997px;width:1000px;text-align:center;top:281.6px;font-size:17px;color:#f0f0f0;font-weight:400;">Z</div>
<div class="a" style="left:2484.3999999999996px;top:279px;width:1px;height:21px;background:#4d4d4d"></div>
<div class="t" style="left:2028.8749999999995px;width:1000px;text-align:center;top:281.6px;font-size:17px;color:#f0f0f0;font-weight:400;">AA</div>
<div class="a" style="left:2573.3499999999995px;top:279px;width:1px;height:21px;background:#4d4d4d"></div>
<div class="t" style="left:2117.8249999999994px;width:1000px;text-align:center;top:281.6px;font-size:17px;color:#f0f0f0;font-weight:400;">AB</div>
<div class="a" style="left:2662.2999999999993px;top:279px;width:1px;height:21px;background:#4d4d4d"></div>
<div class="t" style="left:2206.774999999999px;width:1000px;text-align:center;top:281.6px;font-size:17px;color:#f0f0f0;font-weight:400;">AC</div>
<div class="a" style="left:2751.249999999999px;top:279px;width:1px;height:21px;background:#4d4d4d"></div>
<div class="t" style="left:2295.724999999999px;width:1000px;text-align:center;top:281.6px;font-size:17px;color:#f0f0f0;font-weight:400;">AD</div>
<div class="a" style="left:2840.199999999999px;top:279px;width:1px;height:21px;background:#4d4d4d"></div>
<div class="a" style="left:2860px;top:279px;width:1px;height:21px;background:#4d4d4d"></div>
<div class="a" style="left:47px;top:298px;width:23.6px;height:2px;background:#2e8a4e"></div>
<div class="a" style="left:47px;top:300px;width:2813px;height:1370px;background:#fff"></div>
<div class="a" style="left:11px;top:300px;width:36px;height:1370px;overflow:hidden">
<div class="a" style="left:0;top:0;width:36px;height:35px;background:#6b6b6b"></div>
<div class="t" style="left:-482px;width:1000px;text-align:center;top:16.9px;font-size:17px;color:#f2f2f2">1</div>
<div class="a" style="left:0;top:34.5px;width:36px;height:1px;background:#4a4a4a"></div>
<div class="t" style="left:-482px;width:1000px;text-align:center;top:47.9px;font-size:17px;color:#f2f2f2">2</div>
<div class="a" style="left:0;top:65.5px;width:36px;height:1px;background:#4a4a4a"></div>
<div class="t" style="left:-482px;width:1000px;text-align:center;top:79.9px;font-size:17px;color:#f2f2f2">3</div>
<div class="a" style="left:0;top:97.5px;width:36px;height:1px;background:#4a4a4a"></div>
<div class="t" style="left:-482px;width:1000px;text-align:center;top:102.9px;font-size:17px;color:#f2f2f2">4</div>
<div class="a" style="left:0;top:120.5px;width:36px;height:1px;background:#4a4a4a"></div>
<div class="t" style="left:-482px;width:1000px;text-align:center;top:135.9px;font-size:17px;color:#f2f2f2">5</div>
<div class="a" style="left:0;top:153.5px;width:36px;height:1px;background:#4a4a4a"></div>
<div class="t" style="left:-482px;width:1000px;text-align:center;top:166.9px;font-size:17px;color:#f2f2f2">6</div>
<div class="a" style="left:0;top:184.5px;width:36px;height:1px;background:#4a4a4a"></div>
<div class="t" style="left:-482px;width:1000px;text-align:center;top:197.9px;font-size:17px;color:#f2f2f2">7</div>
<div class="a" style="left:0;top:215.5px;width:36px;height:1px;background:#4a4a4a"></div>
<div class="t" style="left:-482px;width:1000px;text-align:center;top:228.9px;font-size:17px;color:#f2f2f2">8</div>
<div class="a" style="left:0;top:246.5px;width:36px;height:1px;background:#4a4a4a"></div>
<div class="t" style="left:-482px;width:1000px;text-align:center;top:259.9px;font-size:17px;color:#f2f2f2">9</div>
<div class="a" style="left:0;top:277.5px;width:36px;height:1px;background:#4a4a4a"></div>
<div class="t" style="left:-482px;width:1000px;text-align:center;top:290.9px;font-size:17px;color:#f2f2f2">10</div>
<div class="a" style="left:0;top:308.5px;width:36px;height:1px;background:#4a4a4a"></div>
<div class="t" style="left:-482px;width:1000px;text-align:center;top:321.9px;font-size:17px;color:#f2f2f2">11</div>
<div class="a" style="left:0;top:339.5px;width:36px;height:1px;background:#4a4a4a"></div>
<div class="t" style="left:-482px;width:1000px;text-align:center;top:352.9px;font-size:17px;color:#f2f2f2">12</div>
<div class="a" style="left:0;top:370.5px;width:36px;height:1px;background:#4a4a4a"></div>
<div class="t" style="left:-482px;width:1000px;text-align:center;top:383.9px;font-size:17px;color:#f2f2f2">13</div>
<div class="a" style="left:0;top:401.5px;width:36px;height:1px;background:#4a4a4a"></div>
<div class="t" style="left:-482px;width:1000px;text-align:center;top:414.9px;font-size:17px;color:#f2f2f2">14</div>
<div class="a" style="left:0;top:432.5px;width:36px;height:1px;background:#4a4a4a"></div>
<div class="t" style="left:-482px;width:1000px;text-align:center;top:445.9px;font-size:17px;color:#f2f2f2">15</div>
<div class="a" style="left:0;top:463.5px;width:36px;height:1px;background:#4a4a4a"></div>
<div class="t" style="left:-482px;width:1000px;text-align:center;top:476.9px;font-size:17px;color:#f2f2f2">16</div>
<div class="a" style="left:0;top:494.5px;width:36px;height:1px;background:#4a4a4a"></div>
<div class="t" style="left:-482px;width:1000px;text-align:center;top:507.9px;font-size:17px;color:#f2f2f2">17</div>
<div class="a" style="left:0;top:525.5px;width:36px;height:1px;background:#4a4a4a"></div>
<div class="t" style="left:-482px;width:1000px;text-align:center;top:538.9px;font-size:17px;color:#f2f2f2">18</div>
<div class="a" style="left:0;top:556.5px;width:36px;height:1px;background:#4a4a4a"></div>
<div class="t" style="left:-482px;width:1000px;text-align:center;top:569.9px;font-size:17px;color:#f2f2f2">19</div>
<div class="a" style="left:0;top:587.5px;width:36px;height:1px;background:#4a4a4a"></div>
<div class="t" style="left:-482px;width:1000px;text-align:center;top:600.9px;font-size:17px;color:#f2f2f2">20</div>
<div class="a" style="left:0;top:618.5px;width:36px;height:1px;background:#4a4a4a"></div>
<div class="t" style="left:-482px;width:1000px;text-align:center;top:631.9px;font-size:17px;color:#f2f2f2">21</div>
<div class="a" style="left:0;top:649.5px;width:36px;height:1px;background:#4a4a4a"></div>
<div class="t" style="left:-482px;width:1000px;text-align:center;top:662.9px;font-size:17px;color:#f2f2f2">22</div>
<div class="a" style="left:0;top:680.5px;width:36px;height:1px;background:#4a4a4a"></div>
<div class="t" style="left:-482px;width:1000px;text-align:center;top:693.9px;font-size:17px;color:#f2f2f2">23</div>
<div class="a" style="left:0;top:711.5px;width:36px;height:1px;background:#4a4a4a"></div>
<div class="t" style="left:-482px;width:1000px;text-align:center;top:724.9px;font-size:17px;color:#f2f2f2">24</div>
<div class="a" style="left:0;top:742.5px;width:36px;height:1px;background:#4a4a4a"></div>
<div class="a" style="left:0;top:743.0px;width:36px;height:11.5px;overflow:hidden"><div class="t" style="left:-482px;width:1000px;text-align:center;top:-9.9px;font-size:17px;color:#f2f2f2">25</div></div>
<div class="a" style="left:0;top:754.0px;width:36px;height:1px;background:#4a4a4a"></div>
<div class="t" style="left:-482px;width:1000px;text-align:center;top:767.4px;font-size:17px;color:#f2f2f2">26</div>
<div class="a" style="left:0;top:785.0px;width:36px;height:1px;background:#4a4a4a"></div>
<div class="t" style="left:-482px;width:1000px;text-align:center;top:798.4px;font-size:17px;color:#f2f2f2">27</div>
<div class="a" style="left:0;top:816.0px;width:36px;height:1px;background:#4a4a4a"></div>
<div class="t" style="left:-482px;width:1000px;text-align:center;top:829.4px;font-size:17px;color:#f2f2f2">28</div>
<div class="a" style="left:0;top:847.0px;width:36px;height:1px;background:#4a4a4a"></div>
<div class="t" style="left:-482px;width:1000px;text-align:center;top:860.4px;font-size:17px;color:#f2f2f2">29</div>
<div class="a" style="left:0;top:878.0px;width:36px;height:1px;background:#4a4a4a"></div>
<div class="t" style="left:-482px;width:1000px;text-align:center;top:891.4px;font-size:17px;color:#f2f2f2">30</div>
<div class="a" style="left:0;top:909.0px;width:36px;height:1px;background:#4a4a4a"></div>
<div class="t" style="left:-482px;width:1000px;text-align:center;top:922.4px;font-size:17px;color:#f2f2f2">31</div>
<div class="a" style="left:0;top:940.0px;width:36px;height:1px;background:#4a4a4a"></div>
<div class="t" style="left:-482px;width:1000px;text-align:center;top:953.4px;font-size:17px;color:#f2f2f2">32</div>
<div class="a" style="left:0;top:971.0px;width:36px;height:1px;background:#4a4a4a"></div>
<div class="t" style="left:-482px;width:1000px;text-align:center;top:984.4px;font-size:17px;color:#f2f2f2">33</div>
<div class="a" style="left:0;top:1002.0px;width:36px;height:1px;background:#4a4a4a"></div>
<div class="t" style="left:-482px;width:1000px;text-align:center;top:1015.4px;font-size:17px;color:#f2f2f2">34</div>
<div class="a" style="left:0;top:1033.0px;width:36px;height:1px;background:#4a4a4a"></div>
<div class="t" style="left:-482px;width:1000px;text-align:center;top:1046.4px;font-size:17px;color:#f2f2f2">35</div>
<div class="a" style="left:0;top:1064.0px;width:36px;height:1px;background:#4a4a4a"></div>
<div class="t" style="left:-482px;width:1000px;text-align:center;top:1077.4px;font-size:17px;color:#f2f2f2">36</div>
<div class="a" style="left:0;top:1095.0px;width:36px;height:1px;background:#4a4a4a"></div>
<div class="t" style="left:-482px;width:1000px;text-align:center;top:1108.4px;font-size:17px;color:#f2f2f2">37</div>
<div class="a" style="left:0;top:1126.0px;width:36px;height:1px;background:#4a4a4a"></div>
<div class="t" style="left:-482px;width:1000px;text-align:center;top:1139.4px;font-size:17px;color:#f2f2f2">38</div>
<div class="a" style="left:0;top:1157.0px;width:36px;height:1px;background:#4a4a4a"></div>
<div class="t" style="left:-482px;width:1000px;text-align:center;top:1170.4px;font-size:17px;color:#f2f2f2">39</div>
<div class="a" style="left:0;top:1188.0px;width:36px;height:1px;background:#4a4a4a"></div>
<div class="t" style="left:-482px;width:1000px;text-align:center;top:1201.4px;font-size:17px;color:#f2f2f2">40</div>
<div class="a" style="left:0;top:1219.0px;width:36px;height:1px;background:#4a4a4a"></div>
<div class="t" style="left:-482px;width:1000px;text-align:center;top:1232.4px;font-size:17px;color:#f2f2f2">41</div>
<div class="a" style="left:0;top:1250.0px;width:36px;height:1px;background:#4a4a4a"></div>
<div class="t" style="left:-482px;width:1000px;text-align:center;top:1263.4px;font-size:17px;color:#f2f2f2">42</div>
<div class="a" style="left:0;top:1281.0px;width:36px;height:1px;background:#4a4a4a"></div>
<div class="t" style="left:-482px;width:1000px;text-align:center;top:1294.4px;font-size:17px;color:#f2f2f2">43</div>
<div class="a" style="left:0;top:1312.0px;width:36px;height:1px;background:#4a4a4a"></div>
<div class="t" style="left:-482px;width:1000px;text-align:center;top:1325.4px;font-size:17px;color:#f2f2f2">44</div>
<div class="a" style="left:0;top:1343.0px;width:36px;height:1px;background:#4a4a4a"></div>
<div class="a" style="left:0;top:1343.5px;width:36px;height:11.5px;overflow:hidden"><div class="t" style="left:-482px;width:1000px;text-align:center;top:-9.9px;font-size:17px;color:#f2f2f2">45</div></div>
<div class="a" style="left:0;top:1354.5px;width:36px;height:1px;background:#4a4a4a"></div>
<div class="t" style="left:-482px;width:1000px;text-align:center;top:1367.9px;font-size:17px;color:#f2f2f2">46</div>
<div class="a" style="left:0;top:1385.5px;width:36px;height:1px;background:#4a4a4a"></div>
</div>
<div class="a" style="left:46px;top:300px;width:1.5px;height:35px;background:#2e8a4e"></div>
<div class="t" style="left:77px;top:302.9px;font-size:32px;color:#262626;font-weight:700;-webkit-text-stroke:0.5px #262626">Financial Charts</div>
<div class="t" style="left:76px;top:339.8px;font-size:25px;color:#000;font-weight:700;letter-spacing:1px;-webkit-text-stroke:0.4px #000">ABC Company Inc.</div>
<div class="t" style="left:74px;top:373.8px;font-size:18px;color:#2f78dc;font-weight:700;letter-spacing:0.35px;text-decoration:underline;text-decoration-thickness:1.5px;text-underline-offset:2px">Go to Table of Contents</div>
<div class="a" style="left:47px;top:453.5px;width:2813px;height:1px;background:#8a8a8a"></div>
<div class="a" style="left:70.6px;top:421px;width:1331.4px;height:33px;background:#4b50d3"></div>
<div class="a" style="left:1417px;top:421px;width:1424px;height:33px;background:#4b50d3"></div>
<div class="t" style="left:237px;width:1000px;text-align:center;top:425.1px;font-size:27px;color:#fff;font-weight:700;letter-spacing:0.5px;-webkit-text-stroke:0.4px #fff">5 years</div>
<div class="t" style="left:1629px;width:1000px;text-align:center;top:425.1px;font-size:27px;color:#fff;font-weight:700;letter-spacing:0.6px;-webkit-text-stroke:0.4px #fff">60 months</div>
<div class="a" style="left:1402px;top:421px;width:15px;height:33px;background:#c9c9c9"></div>
<div class="a" style="left:1402px;top:454px;width:15px;height:1216px;background:#bfbfbf"></div>
<div class="a" style="left:93.6px;top:1043px;width:2747.4px;height:12px;background:#bfbfbf"></div>
<div class="a" style="left:93.6px;top:1643.5px;width:2747.4px;height:11.5px;background:#bfbfbf"></div>
<div class="t" style="left:327px;top:467.0px;font-size:35px;color:#000;font-weight:700;letter-spacing:0.6px;-webkit-text-stroke:0.5px #000">REVENUE BREAKDOWN - $&#39;000</div>
<div class="t" style="left:141.2px;top:504.9px;font-size:17px;color:#000;font-weight:400;">Commission Revenue</div>
<div class="t" style="left:575.5px;top:504.9px;font-size:17px;color:#000;font-weight:400;">Sellers Subscription - Individuals</div>
<div class="t" style="left:1011.0px;top:504.9px;font-size:17px;color:#000;font-weight:400;">Sellers Subscription - Small Businesses</div>
<div class="t" style="left:141.2px;top:524.3px;font-size:17px;color:#000;font-weight:400;">Sellers Subscription - Specialized Vendors</div>
<div class="t" style="left:575.5px;top:524.3px;font-size:17px;color:#000;font-weight:400;">Buyers Subscription - Casual Renters</div>
<div class="t" style="left:1011.0px;top:524.3px;font-size:17px;color:#000;font-weight:400;">Buyers Subscription - Project Users</div>
<div class="t" style="left:141.2px;top:543.6px;font-size:17px;color:#000;font-weight:400;">Buyers Subscription - Event Planners</div>
<div class="t" style="left:575.5px;top:543.6px;font-size:17px;color:#000;font-weight:400;">Ads / Promotion Fees</div>
<div class="t" style="left:1011.0px;top:543.6px;font-size:17px;color:#000;font-weight:400;">Listing Fees</div>
<div class="t" style="left:141.2px;top:563.0px;font-size:17px;color:#000;font-weight:400;">Payment Processing Fees</div>
<div class="t" style="left:-825.5px;width:1000px;text-align:right;top:888.6px;font-size:20px;color:#000;font-weight:700;letter-spacing:0.9px;-webkit-text-stroke:0.3px #000">2,000</div>
<div class="t" style="left:-825.5px;width:1000px;text-align:right;top:831.7px;font-size:20px;color:#000;font-weight:700;letter-spacing:0.9px;-webkit-text-stroke:0.3px #000">4,000</div>
<div class="t" style="left:-825.5px;width:1000px;text-align:right;top:774.8px;font-size:20px;color:#000;font-weight:700;letter-spacing:0.9px;-webkit-text-stroke:0.3px #000">6,000</div>
<div class="t" style="left:-825.5px;width:1000px;text-align:right;top:718.0px;font-size:20px;color:#000;font-weight:700;letter-spacing:0.9px;-webkit-text-stroke:0.3px #000">8,000</div>
<div class="t" style="left:-825.5px;width:1000px;text-align:right;top:661.1px;font-size:20px;color:#000;font-weight:700;letter-spacing:0.9px;-webkit-text-stroke:0.3px #000">10,000</div>
<div class="t" style="left:-825.5px;width:1000px;text-align:right;top:604.2px;font-size:20px;color:#000;font-weight:700;letter-spacing:0.9px;-webkit-text-stroke:0.3px #000">12,000</div>
<div class="t" style="left:-837px;width:1000px;text-align:right;top:943.1px;font-size:20px;color:#000;font-weight:700;-webkit-text-stroke:0.4px #000">-</div>
<div class="t" style="left:-189px;width:1000px;text-align:center;top:991.1px;font-size:20px;color:#000;font-weight:700;letter-spacing:0.9px;-webkit-text-stroke:0.3px #000">2026</div>
<div class="t" style="left:35px;width:1000px;text-align:center;top:991.1px;font-size:20px;color:#000;font-weight:700;letter-spacing:0.9px;-webkit-text-stroke:0.3px #000">2027</div>
<div class="t" style="left:259px;width:1000px;text-align:center;top:991.1px;font-size:20px;color:#000;font-weight:700;letter-spacing:0.9px;-webkit-text-stroke:0.3px #000">2028</div>
<div class="t" style="left:483px;width:1000px;text-align:center;top:991.1px;font-size:20px;color:#000;font-weight:700;letter-spacing:0.9px;-webkit-text-stroke:0.3px #000">2029</div>
<div class="t" style="left:707px;width:1000px;text-align:center;top:991.1px;font-size:20px;color:#000;font-weight:700;letter-spacing:0.9px;-webkit-text-stroke:0.3px #000">2030</div>
<div class="t" style="left:1824.5px;top:467.4px;font-size:35px;color:#000;font-weight:700;letter-spacing:0.6px;-webkit-text-stroke:0.5px #000">REVENUE BREAKDOWN - $&#39;000</div>
<div class="t" style="left:1561.5px;top:523.9px;font-size:17px;color:#000;font-weight:400;">Commission Revenue</div>
<div class="t" style="left:1860.5px;top:523.9px;font-size:17px;color:#000;font-weight:400;">Sellers Subscription - Individuals</div>
<div class="t" style="left:2245.5px;top:523.9px;font-size:17px;color:#000;font-weight:400;">Sellers Subscription - Small Businesses</div>
<div class="t" style="left:494.5px;width:1000px;text-align:right;top:886.9px;font-size:20px;color:#000;font-weight:700;letter-spacing:0.9px;-webkit-text-stroke:0.3px #000">200</div>
<div class="t" style="left:494.5px;width:1000px;text-align:right;top:830.1px;font-size:20px;color:#000;font-weight:700;letter-spacing:0.9px;-webkit-text-stroke:0.3px #000">400</div>
<div class="t" style="left:494.5px;width:1000px;text-align:right;top:773.3px;font-size:20px;color:#000;font-weight:700;letter-spacing:0.9px;-webkit-text-stroke:0.3px #000">600</div>
<div class="t" style="left:494.5px;width:1000px;text-align:right;top:716.6px;font-size:20px;color:#000;font-weight:700;letter-spacing:0.9px;-webkit-text-stroke:0.3px #000">800</div>
<div class="t" style="left:494.5px;width:1000px;text-align:right;top:659.8px;font-size:20px;color:#000;font-weight:700;letter-spacing:0.9px;-webkit-text-stroke:0.3px #000">1,000</div>
<div class="t" style="left:494.5px;width:1000px;text-align:right;top:603.0px;font-size:20px;color:#000;font-weight:700;letter-spacing:0.9px;-webkit-text-stroke:0.3px #000">1,200</div>
<div class="t" style="left:483px;width:1000px;text-align:right;top:941.6px;font-size:20px;color:#000;font-weight:700;-webkit-text-stroke:0.4px #000">-</div>
<div class="t" style="left:443px;top:1068.1px;font-size:35px;color:#000;font-weight:700;letter-spacing:0.6px;-webkit-text-stroke:0.5px #000">CASH BALANCE - $&#39;000</div>
<div class="t" style="left:-838.5px;width:1000px;text-align:right;top:1135.2px;font-size:20px;color:#000;font-weight:700;letter-spacing:1px;-webkit-text-stroke:0.3px #000">5,000</div>
<div class="t" style="left:-838.5px;width:1000px;text-align:right;top:1203.9px;font-size:20px;color:#000;font-weight:700;letter-spacing:1px;-webkit-text-stroke:0.3px #000">4,000</div>
<div class="t" style="left:-838.5px;width:1000px;text-align:right;top:1272.6px;font-size:20px;color:#000;font-weight:700;letter-spacing:1px;-webkit-text-stroke:0.3px #000">3,000</div>
<div class="t" style="left:-838.5px;width:1000px;text-align:right;top:1341.3px;font-size:20px;color:#000;font-weight:700;letter-spacing:1px;-webkit-text-stroke:0.3px #000">2,000</div>
<div class="t" style="left:-838.5px;width:1000px;text-align:right;top:1410.0px;font-size:20px;color:#000;font-weight:700;letter-spacing:1px;-webkit-text-stroke:0.3px #000">1,000</div>
<div class="t" style="left:-833px;width:1000px;text-align:right;top:1547.4px;font-size:20px;color:#000;font-weight:700;letter-spacing:1.4px;-webkit-text-stroke:0.3px #000">(1,000)</div>
<div class="t" style="left:-850px;width:1000px;text-align:right;top:1476.3px;font-size:20px;color:#000;font-weight:700;-webkit-text-stroke:0.4px #000">-</div>
<div class="t" style="left:-201.5px;width:1000px;text-align:center;top:1592.1px;font-size:20px;color:#000;font-weight:700;letter-spacing:0.9px;-webkit-text-stroke:0.3px #000">2026</div>
<div class="t" style="left:24.5px;width:1000px;text-align:center;top:1592.1px;font-size:20px;color:#000;font-weight:700;letter-spacing:0.9px;-webkit-text-stroke:0.3px #000">2027</div>
<div class="t" style="left:250.5px;width:1000px;text-align:center;top:1592.1px;font-size:20px;color:#000;font-weight:700;letter-spacing:0.9px;-webkit-text-stroke:0.3px #000">2028</div>
<div class="t" style="left:476.5px;width:1000px;text-align:center;top:1592.1px;font-size:20px;color:#000;font-weight:700;letter-spacing:0.9px;-webkit-text-stroke:0.3px #000">2029</div>
<div class="t" style="left:702.5px;width:1000px;text-align:center;top:1592.1px;font-size:20px;color:#000;font-weight:700;letter-spacing:0.9px;-webkit-text-stroke:0.3px #000">2030</div>
<div class="t" style="left:1907px;top:1065.1px;font-size:35px;color:#000;font-weight:700;letter-spacing:0.6px;-webkit-text-stroke:0.5px #000">CASH BALANCE - $&#39;000</div>
<div class="t" style="left:506.5px;width:1000px;text-align:right;top:1136.8px;font-size:20px;color:#000;font-weight:700;letter-spacing:1px;-webkit-text-stroke:0.3px #000">5,000</div>
<div class="t" style="left:506.5px;width:1000px;text-align:right;top:1204.9px;font-size:20px;color:#000;font-weight:700;letter-spacing:1px;-webkit-text-stroke:0.3px #000">4,000</div>
<div class="t" style="left:506.5px;width:1000px;text-align:right;top:1272.9px;font-size:20px;color:#000;font-weight:700;letter-spacing:1px;-webkit-text-stroke:0.3px #000">3,000</div>
<div class="t" style="left:506.5px;width:1000px;text-align:right;top:1341.0px;font-size:20px;color:#000;font-weight:700;letter-spacing:1px;-webkit-text-stroke:0.3px #000">2,000</div>
<div class="t" style="left:506.5px;width:1000px;text-align:right;top:1409.0px;font-size:20px;color:#000;font-weight:700;letter-spacing:1px;-webkit-text-stroke:0.3px #000">1,000</div>
<div class="t" style="left:512px;width:1000px;text-align:right;top:1545.1px;font-size:20px;color:#000;font-weight:700;letter-spacing:1.4px;-webkit-text-stroke:0.3px #000">(1,000)</div>
<div class="t" style="left:495px;width:1000px;text-align:right;top:1475.6px;font-size:20px;color:#000;font-weight:700;-webkit-text-stroke:0.4px #000">-</div>
<div class="t" style="left:823px;top:1662.7px;font-size:34px;color:#000;font-weight:700;">&#39;</div>
<div class="t" style="left:1825px;top:1661.9px;font-size:35px;color:#000;font-weight:700;letter-spacing:0.6px;-webkit-text-stroke:0.5px #000">OPERATING CASH FLOW - $&#39;000</div>
<svg class="a" style="left:0;top:0;font-family:'Liberation Sans'" width="2902" height="1762"><rect x="126.70" y="508.00" width="10.00" height="10.00" fill="#4cb2e6"/><rect x="561.00" y="508.00" width="10.00" height="10.00" fill="#4a50c8"/><rect x="996.50" y="508.00" width="10.00" height="10.00" fill="#ef7b6c"/><rect x="126.70" y="527.35" width="10.00" height="10.00" fill="#f4b400"/><rect x="561.00" y="527.35" width="10.00" height="10.00" fill="#2bb3a0"/><rect x="996.50" y="527.35" width="10.00" height="10.00" fill="#629b3e"/><rect x="126.70" y="546.70" width="10.00" height="10.00" fill="#90a4d4"/><rect x="561.00" y="546.70" width="10.00" height="10.00" fill="#eea98b"/><rect x="996.50" y="546.70" width="10.00" height="10.00" fill="#bfbfbf"/><rect x="126.70" y="566.05" width="10.00" height="10.00" fill="#fdd58e"/><line x1="199" y1="898.5" x2="1319" y2="898.5" stroke="#5ea6d0" stroke-width="1"/><line x1="199" y1="841.5" x2="1319" y2="841.5" stroke="#5ea6d0" stroke-width="1"/><line x1="199" y1="784.5" x2="1319" y2="784.5" stroke="#5ea6d0" stroke-width="1"/><line x1="199" y1="727.5" x2="1319" y2="727.5" stroke="#5ea6d0" stroke-width="1"/><line x1="199" y1="670.5" x2="1319" y2="670.5" stroke="#5ea6d0" stroke-width="1"/><line x1="199" y1="614.5" x2="1319" y2="614.5" stroke="#5ea6d0" stroke-width="1"/><rect x="242.00" y="953.30" width="140.00" height="1.80" fill="#4cb2e6"/><rect x="242.00" y="953.00" width="140.00" height="0.60" fill="#ef7b6c"/><rect x="242.00" y="952.70" width="140.00" height="0.60" fill="#f4b400"/><rect x="242.00" y="952.30" width="140.00" height="0.70" fill="#629b3e"/><rect x="242.00" y="951.50" width="140.00" height="1.10" fill="#90a4d4"/><rect x="242.00" y="951.00" width="140.00" height="0.80" fill="#eea98b"/><rect x="242.00" y="950.50" width="140.00" height="0.80" fill="#fdd58e"/><rect x="466.00" y="944.10" width="140.00" height="11.00" fill="#4cb2e6"/><rect x="466.00" y="942.50" width="140.00" height="1.90" fill="#ef7b6c"/><rect x="466.00" y="940.90" width="140.00" height="1.90" fill="#f4b400"/><rect x="466.00" y="938.80" width="140.00" height="2.40" fill="#629b3e"/><rect x="466.00" y="935.60" width="140.00" height="3.50" fill="#90a4d4"/><rect x="466.00" y="933.50" width="140.00" height="2.40" fill="#eea98b"/><rect x="466.00" y="930.80" width="140.00" height="3.00" fill="#fdd58e"/><rect x="690.00" y="921.60" width="140.00" height="33.50" fill="#4cb2e6"/><rect x="690.00" y="917.30" width="140.00" height="4.60" fill="#ef7b6c"/><rect x="690.00" y="913.00" width="140.00" height="4.60" fill="#f4b400"/><rect x="690.00" y="906.00" width="140.00" height="7.30" fill="#629b3e"/><rect x="690.00" y="893.10" width="140.00" height="13.20" fill="#90a4d4"/><rect x="690.00" y="887.20" width="140.00" height="6.20" fill="#eea98b"/><rect x="690.00" y="877.60" width="140.00" height="9.90" fill="#fdd58e"/><rect x="914.00" y="883.00" width="140.00" height="72.10" fill="#4cb2e6"/><rect x="914.00" y="873.40" width="140.00" height="9.90" fill="#ef7b6c"/><rect x="914.00" y="864.80" width="140.00" height="8.90" fill="#f4b400"/><rect x="914.00" y="849.30" width="140.00" height="15.80" fill="#629b3e"/><rect x="914.00" y="818.30" width="140.00" height="31.30" fill="#90a4d4"/><rect x="914.00" y="803.80" width="140.00" height="14.80" fill="#eea98b"/><rect x="914.00" y="785.60" width="140.00" height="18.50" fill="#fdd58e"/><rect x="1138.00" y="832.10" width="140.00" height="123.00" fill="#4cb2e6"/><rect x="1138.00" y="814.40" width="140.00" height="18.00" fill="#ef7b6c"/><rect x="1138.00" y="796.70" width="140.00" height="18.00" fill="#f4b400"/><rect x="1138.00" y="769.90" width="140.00" height="27.10" fill="#629b3e"/><rect x="1138.00" y="718.50" width="140.00" height="51.70" fill="#90a4d4"/><rect x="1138.00" y="691.70" width="140.00" height="27.10" fill="#eea98b"/><rect x="1138.00" y="655.80" width="140.00" height="36.20" fill="#fdd58e"/><line x1="199" y1="955" x2="1319" y2="955" stroke="#4aa3d6" stroke-width="2"/><rect x="1548.00" y="527.00" width="10.00" height="10.00" fill="#4cb2e6"/><rect x="1847.00" y="527.00" width="10.00" height="10.00" fill="#4a50c8"/><rect x="2232.00" y="527.00" width="10.00" height="10.00" fill="#ef7b6c"/><line x1="1519" y1="896.5" x2="2792" y2="896.5" stroke="#5ea6d0" stroke-width="1"/><line x1="1519" y1="839.5" x2="2792" y2="839.5" stroke="#5ea6d0" stroke-width="1"/><line x1="1519" y1="783.5" x2="2792" y2="783.5" stroke="#5ea6d0" stroke-width="1"/><line x1="1519" y1="726.5" x2="2792" y2="726.5" stroke="#5ea6d0" stroke-width="1"/><line x1="1519" y1="669.5" x2="2792" y2="669.5" stroke="#5ea6d0" stroke-width="1"/><line x1="1519" y1="612.5" x2="2792" y2="612.5" stroke="#5ea6d0" stroke-width="1"/><polygon points="1519.00,951.86 1540.58,951.61 1562.15,951.35 1583.73,951.09 1605.31,950.83 1626.88,950.57 1648.46,950.32 1670.03,950.06 1691.61,949.80 1713.19,949.54 1734.76,949.28 1756.34,949.03 1777.92,947.32 1799.49,946.53 1821.07,945.73 1842.64,944.94 1864.22,944.14 1885.80,943.35 1907.37,943.02 1928.95,942.68 1950.53,942.35 1972.10,942.02 1993.68,941.69 2015.25,941.36 2036.83,934.83 2058.41,932.22 2079.98,929.61 2101.56,926.99 2123.14,924.38 2144.71,921.77 2166.29,921.20 2187.86,920.64 2209.44,920.07 2231.02,919.50 2252.59,918.93 2274.17,918.36 2295.75,909.00 2317.32,904.96 2338.90,900.93 2360.47,896.90 2382.05,892.87 2403.63,888.84 2425.20,888.03 2446.78,887.23 2468.36,886.43 2489.93,885.62 2511.51,884.82 2533.08,884.01 2554.66,870.95 2576.24,865.84 2597.81,860.73 2619.39,855.62 2640.97,850.51 2662.54,845.40 2684.12,844.74 2705.69,844.08 2727.27,843.41 2748.85,842.75 2770.42,842.09 2792.00,841.43 2792.00,953.00 2770.42,953.00 2748.85,953.00 2727.27,953.00 2705.69,953.00 2684.12,953.00 2662.54,953.00 2640.97,953.00 2619.39,953.00 2597.81,953.00 2576.24,953.00 2554.66,953.00 2533.08,953.00 2511.51,953.00 2489.93,953.00 2468.36,953.00 2446.78,953.00 2425.20,953.00 2403.63,953.00 2382.05,953.00 2360.47,953.00 2338.90,953.00 2317.32,953.00 2295.75,953.00 2274.17,953.00 2252.59,953.00 2231.02,953.00 2209.44,953.00 2187.86,953.00 2166.29,953.00 2144.71,953.00 2123.14,953.00 2101.56,953.00 2079.98,953.00 2058.41,953.00 2036.83,953.00 2015.25,953.00 1993.68,953.00 1972.10,953.00 1950.53,953.00 1928.95,953.00 1907.37,953.00 1885.80,953.00 1864.22,953.00 1842.64,953.00 1821.07,953.00 1799.49,953.00 1777.92,953.00 1756.34,953.00 1734.76,953.00 1713.19,953.00 1691.61,953.00 1670.03,953.00 1648.46,953.00 1626.88,953.00 1605.31,953.00 1583.73,953.00 1562.15,953.00 1540.58,953.00 1519.00,953.00" fill="#4cb2e6"/><polygon points="1519.00,951.72 1540.58,951.45 1562.15,951.18 1583.73,950.91 1605.31,950.64 1626.88,950.37 1648.46,950.10 1670.03,949.83 1691.61,949.55 1713.19,949.28 1734.76,949.01 1756.34,948.74 1777.92,946.75 1799.49,945.85 1821.07,944.94 1842.64,944.03 1864.22,943.12 1885.80,942.21 1907.37,941.88 1928.95,941.55 1950.53,941.22 1972.10,940.89 1993.68,940.56 2015.25,940.22 2036.83,932.84 2058.41,929.95 2079.98,927.05 2101.56,924.16 2123.14,921.26 2144.71,918.36 2166.29,917.70 2187.86,917.04 2209.44,916.38 2231.02,915.71 2252.59,915.05 2274.17,914.39 2295.75,903.89 2317.32,899.40 2338.90,894.91 2360.47,890.43 2382.05,885.94 2403.63,881.46 2425.20,880.37 2446.78,879.28 2468.36,878.19 2489.93,877.10 2511.51,876.02 2533.08,874.93 2554.66,858.46 2576.24,853.18 2597.81,847.90 2619.39,842.62 2640.97,837.34 2662.54,832.06 2684.12,830.50 2705.69,828.94 2727.27,827.37 2748.85,825.81 2770.42,824.25 2792.00,822.69 2792.00,841.43 2770.42,842.09 2748.85,842.75 2727.27,843.41 2705.69,844.08 2684.12,844.74 2662.54,845.40 2640.97,850.51 2619.39,855.62 2597.81,860.73 2576.24,865.84 2554.66,870.95 2533.08,884.01 2511.51,884.82 2489.93,885.62 2468.36,886.43 2446.78,887.23 2425.20,888.03 2403.63,888.84 2382.05,892.87 2360.47,896.90 2338.90,900.93 2317.32,904.96 2295.75,909.00 2274.17,918.36 2252.59,918.93 2231.02,919.50 2209.44,920.07 2187.86,920.64 2166.29,921.20 2144.71,921.77 2123.14,924.38 2101.56,926.99 2079.98,929.61 2058.41,932.22 2036.83,934.83 2015.25,941.36 1993.68,941.69 1972.10,942.02 1950.53,942.35 1928.95,942.68 1907.37,943.02 1885.80,943.35 1864.22,944.14 1842.64,944.94 1821.07,945.73 1799.49,946.53 1777.92,947.32 1756.34,949.03 1734.76,949.28 1713.19,949.54 1691.61,949.80 1670.03,950.06 1648.46,950.32 1626.88,950.57 1605.31,950.83 1583.73,951.09 1562.15,951.35 1540.58,951.61 1519.00,951.86" fill="#ef7b6c"/><polygon points="1519.00,951.58 1540.58,951.30 1562.15,951.01 1583.73,950.73 1605.31,950.44 1626.88,950.16 1648.46,949.88 1670.03,949.59 1691.61,949.31 1713.19,949.03 1734.76,948.74 1756.34,948.46 1777.92,946.19 1799.49,945.16 1821.07,944.14 1842.64,943.12 1864.22,942.10 1885.80,941.08 1907.37,940.65 1928.95,940.22 1950.53,939.80 1972.10,939.37 1993.68,938.95 2015.25,938.52 2036.83,930.86 2058.41,927.73 2079.98,924.61 2101.56,921.49 2123.14,918.36 2144.71,915.24 2166.29,914.34 2187.86,913.44 2209.44,912.54 2231.02,911.65 2252.59,910.75 2274.17,909.85 2295.75,898.49 2317.32,893.49 2338.90,888.50 2360.47,883.50 2382.05,878.50 2403.63,873.51 2425.20,871.99 2446.78,870.48 2468.36,868.97 2489.93,867.45 2511.51,865.94 2533.08,864.42 2554.66,848.52 2576.24,842.28 2597.81,836.03 2619.39,829.79 2640.97,823.54 2662.54,817.30 2684.12,815.26 2705.69,813.23 2727.27,811.19 2748.85,809.16 2770.42,807.12 2792.00,805.09 2792.00,822.69 2770.42,824.25 2748.85,825.81 2727.27,827.37 2705.69,828.94 2684.12,830.50 2662.54,832.06 2640.97,837.34 2619.39,842.62 2597.81,847.90 2576.24,853.18 2554.66,858.46 2533.08,874.93 2511.51,876.02 2489.93,877.10 2468.36,878.19 2446.78,879.28 2425.20,880.37 2403.63,881.46 2382.05,885.94 2360.47,890.43 2338.90,894.91 2317.32,899.40 2295.75,903.89 2274.17,914.39 2252.59,915.05 2231.02,915.71 2209.44,916.38 2187.86,917.04 2166.29,917.70 2144.71,918.36 2123.14,921.26 2101.56,924.16 2079.98,927.05 2058.41,929.95 2036.83,932.84 2015.25,940.22 1993.68,940.56 1972.10,940.89 1950.53,941.22 1928.95,941.55 1907.37,941.88 1885.80,942.21 1864.22,943.12 1842.64,944.03 1821.07,944.94 1799.49,945.85 1777.92,946.75 1756.34,948.74 1734.76,949.01 1713.19,949.28 1691.61,949.55 1670.03,949.83 1648.46,950.10 1626.88,950.37 1605.31,950.64 1583.73,950.91 1562.15,951.18 1540.58,951.45 1519.00,951.72" fill="#f4b400"/><polygon points="1519.00,951.44 1540.58,951.14 1562.15,950.84 1583.73,950.55 1605.31,950.25 1626.88,949.95 1648.46,949.66 1670.03,949.36 1691.61,949.06 1713.19,948.77 1734.76,948.47 1756.34,948.17 1777.92,945.62 1799.49,944.43 1821.07,943.23 1842.64,942.04 1864.22,940.85 1885.80,939.66 1907.37,939.09 1928.95,938.52 1950.53,937.95 1972.10,937.39 1993.68,936.82 2015.25,936.25 2036.83,928.30 2058.41,924.50 2079.98,920.69 2101.56,916.89 2123.14,913.08 2144.71,909.28 2166.29,908.29 2187.86,907.29 2209.44,906.30 2231.02,905.30 2252.59,904.31 2274.17,903.32 2295.75,890.54 2317.32,884.35 2338.90,878.16 2360.47,871.97 2382.05,865.79 2403.63,859.60 2425.20,857.94 2446.78,856.28 2468.36,854.63 2489.93,852.97 2511.51,851.32 2533.08,849.66 2554.66,830.64 2576.24,823.26 2597.81,815.88 2619.39,808.49 2640.97,801.11 2662.54,793.73 2684.12,791.46 2705.69,789.19 2727.27,786.92 2748.85,784.65 2770.42,782.38 2792.00,780.10 2792.00,805.09 2770.42,807.12 2748.85,809.16 2727.27,811.19 2705.69,813.23 2684.12,815.26 2662.54,817.30 2640.97,823.54 2619.39,829.79 2597.81,836.03 2576.24,842.28 2554.66,848.52 2533.08,864.42 2511.51,865.94 2489.93,867.45 2468.36,868.97 2446.78,870.48 2425.20,871.99 2403.63,873.51 2382.05,878.50 2360.47,883.50 2338.90,888.50 2317.32,893.49 2295.75,898.49 2274.17,909.85 2252.59,910.75 2231.02,911.65 2209.44,912.54 2187.86,913.44 2166.29,914.34 2144.71,915.24 2123.14,918.36 2101.56,921.49 2079.98,924.61 2058.41,927.73 2036.83,930.86 2015.25,938.52 1993.68,938.95 1972.10,939.37 1950.53,939.80 1928.95,940.22 1907.37,940.65 1885.80,941.08 1864.22,942.10 1842.64,943.12 1821.07,944.14 1799.49,945.16 1777.92,946.19 1756.34,948.46 1734.76,948.74 1713.19,949.03 1691.61,949.31 1670.03,949.59 1648.46,949.88 1626.88,950.16 1605.31,950.44 1583.73,950.73 1562.15,951.01 1540.58,951.30 1519.00,951.58" fill="#629b3e"/><polygon points="1519.00,951.30 1540.58,950.99 1562.15,950.68 1583.73,950.37 1605.31,950.06 1626.88,949.75 1648.46,949.44 1670.03,949.13 1691.61,948.82 1713.19,948.51 1734.76,948.20 1756.34,947.89 1777.92,944.48 1799.49,943.06 1821.07,941.64 1842.64,940.22 1864.22,938.80 1885.80,937.39 1907.37,936.39 1928.95,935.40 1950.53,934.40 1972.10,933.41 1993.68,932.42 2015.25,931.42 2036.83,921.77 2058.41,916.89 2079.98,912.00 2101.56,907.12 2123.14,902.24 2144.71,897.36 2166.29,895.65 2187.86,893.95 2209.44,892.25 2231.02,890.54 2252.59,888.84 2274.17,887.14 2295.75,871.52 2317.32,864.20 2338.90,856.87 2360.47,849.55 2382.05,842.22 2403.63,834.90 2425.20,831.96 2446.78,829.03 2468.36,826.10 2489.93,823.16 2511.51,820.23 2533.08,817.30 2554.66,795.44 2576.24,786.41 2597.81,777.38 2619.39,768.35 2640.97,759.32 2662.54,750.30 2684.12,747.03 2705.69,743.77 2727.27,740.50 2748.85,737.24 2770.42,733.97 2792.00,730.71 2792.00,780.10 2770.42,782.38 2748.85,784.65 2727.27,786.92 2705.69,789.19 2684.12,791.46 2662.54,793.73 2640.97,801.11 2619.39,808.49 2597.81,815.88 2576.24,823.26 2554.66,830.64 2533.08,849.66 2511.51,851.32 2489.93,852.97 2468.36,854.63 2446.78,856.28 2425.20,857.94 2403.63,859.60 2382.05,865.79 2360.47,871.97 2338.90,878.16 2317.32,884.35 2295.75,890.54 2274.17,903.32 2252.59,904.31 2231.02,905.30 2209.44,906.30 2187.86,907.29 2166.29,908.29 2144.71,909.28 2123.14,913.08 2101.56,916.89 2079.98,920.69 2058.41,924.50 2036.83,928.30 2015.25,936.25 1993.68,936.82 1972.10,937.39 1950.53,937.95 1928.95,938.52 1907.37,939.09 1885.80,939.66 1864.22,940.85 1842.64,942.04 1821.07,943.23 1799.49,944.43 1777.92,945.62 1756.34,948.17 1734.76,948.47 1713.19,948.77 1691.61,949.06 1670.03,949.36 1648.46,949.66 1626.88,949.95 1605.31,950.25 1583.73,950.55 1562.15,950.84 1540.58,951.14 1519.00,951.44" fill="#90a4d4"/><polygon points="1519.00,951.15 1540.58,950.83 1562.15,950.51 1583.73,950.19 1605.31,949.86 1626.88,949.54 1648.46,949.22 1670.03,948.90 1691.61,948.57 1713.19,948.25 1734.76,947.93 1756.34,947.61 1777.92,943.92 1799.49,942.38 1821.07,940.85 1842.64,939.32 1864.22,937.78 1885.80,936.25 1907.37,935.16 1928.95,934.07 1950.53,932.99 1972.10,931.90 1993.68,930.81 2015.25,929.72 2036.83,918.93 2058.41,913.65 2079.98,908.37 2101.56,903.09 2123.14,897.81 2144.71,892.53 2166.29,890.45 2187.86,888.37 2209.44,886.28 2231.02,884.20 2252.59,882.12 2274.17,880.04 2295.75,863.00 2317.32,855.11 2338.90,847.22 2360.47,839.33 2382.05,831.43 2403.63,823.54 2425.20,820.04 2446.78,816.54 2468.36,813.04 2489.93,809.54 2511.51,806.03 2533.08,802.53 2554.66,778.69 2576.24,768.92 2597.81,759.15 2619.39,749.39 2640.97,739.62 2662.54,729.85 2684.12,725.50 2705.69,721.15 2727.27,716.80 2748.85,712.44 2770.42,708.09 2792.00,703.74 2792.00,730.71 2770.42,733.97 2748.85,737.24 2727.27,740.50 2705.69,743.77 2684.12,747.03 2662.54,750.30 2640.97,759.32 2619.39,768.35 2597.81,777.38 2576.24,786.41 2554.66,795.44 2533.08,817.30 2511.51,820.23 2489.93,823.16 2468.36,826.10 2446.78,829.03 2425.20,831.96 2403.63,834.90 2382.05,842.22 2360.47,849.55 2338.90,856.87 2317.32,864.20 2295.75,871.52 2274.17,887.14 2252.59,888.84 2231.02,890.54 2209.44,892.25 2187.86,893.95 2166.29,895.65 2144.71,897.36 2123.14,902.24 2101.56,907.12 2079.98,912.00 2058.41,916.89 2036.83,921.77 2015.25,931.42 1993.68,932.42 1972.10,933.41 1950.53,934.40 1928.95,935.40 1907.37,936.39 1885.80,937.39 1864.22,938.80 1842.64,940.22 1821.07,941.64 1799.49,943.06 1777.92,944.48 1756.34,947.89 1734.76,948.20 1713.19,948.51 1691.61,948.82 1670.03,949.13 1648.46,949.44 1626.88,949.75 1605.31,950.06 1583.73,950.37 1562.15,950.68 1540.58,950.99 1519.00,951.30" fill="#eea98b"/><polygon points="1519.00,951.01 1540.58,950.68 1562.15,950.34 1583.73,950.01 1605.31,949.67 1626.88,949.34 1648.46,949.00 1670.03,948.66 1691.61,948.33 1713.19,947.99 1734.76,947.66 1756.34,947.32 1777.92,942.78 1799.49,941.02 1821.07,939.26 1842.64,937.50 1864.22,935.74 1885.80,933.98 1907.37,932.65 1928.95,931.33 1950.53,930.00 1972.10,928.68 1993.68,927.35 2015.25,926.03 2036.83,914.39 2058.41,908.65 2079.98,902.92 2101.56,897.19 2123.14,891.45 2144.71,885.72 2166.29,883.11 2187.86,880.51 2209.44,877.91 2231.02,875.31 2252.59,872.70 2274.17,870.10 2295.75,852.50 2317.32,843.53 2338.90,834.56 2360.47,825.59 2382.05,816.61 2403.63,807.64 2425.20,803.38 2446.78,799.13 2468.36,794.87 2489.93,790.61 2511.51,786.35 2533.08,782.09 2554.66,756.26 2576.24,744.96 2597.81,733.66 2619.39,722.36 2640.97,711.06 2662.54,699.76 2684.12,694.27 2705.69,688.78 2727.27,683.30 2748.85,677.81 2770.42,672.32 2792.00,666.83 2792.00,703.74 2770.42,708.09 2748.85,712.44 2727.27,716.80 2705.69,721.15 2684.12,725.50 2662.54,729.85 2640.97,739.62 2619.39,749.39 2597.81,759.15 2576.24,768.92 2554.66,778.69 2533.08,802.53 2511.51,806.03 2489.93,809.54 2468.36,813.04 2446.78,816.54 2425.20,820.04 2403.63,823.54 2382.05,831.43 2360.47,839.33 2338.90,847.22 2317.32,855.11 2295.75,863.00 2274.17,880.04 2252.59,882.12 2231.02,884.20 2209.44,886.28 2187.86,888.37 2166.29,890.45 2144.71,892.53 2123.14,897.81 2101.56,903.09 2079.98,908.37 2058.41,913.65 2036.83,918.93 2015.25,929.72 1993.68,930.81 1972.10,931.90 1950.53,932.99 1928.95,934.07 1907.37,935.16 1885.80,936.25 1864.22,937.78 1842.64,939.32 1821.07,940.85 1799.49,942.38 1777.92,943.92 1756.34,947.61 1734.76,947.93 1713.19,948.25 1691.61,948.57 1670.03,948.90 1648.46,949.22 1626.88,949.54 1605.31,949.86 1583.73,950.19 1562.15,950.51 1540.58,950.83 1519.00,951.15" fill="#fdd58e"/><text x="0" y="0" font-size="19.5" text-anchor="end" fill="#000" transform="translate(1516.5,970.5) rotate(-45) translate(0,13.5)">Jan-26</text><text x="0" y="0" font-size="19.5" text-anchor="end" fill="#000" transform="translate(1559.7,970.5) rotate(-45) translate(0,13.5)">Mar-26</text><text x="0" y="0" font-size="19.5" text-anchor="end" fill="#000" transform="translate(1602.8,970.5) rotate(-45) translate(0,13.5)">May-26</text><text x="0" y="0" font-size="19.5" text-anchor="end" fill="#000" transform="translate(1646.0,970.5) rotate(-45) translate(0,13.5)">Jul-26</text><text x="0" y="0" font-size="19.5" text-anchor="end" fill="#000" transform="translate(1689.1,970.5) rotate(-45) translate(0,13.5)">Sep-26</text><text x="0" y="0" font-size="19.5" text-anchor="end" fill="#000" transform="translate(1732.3,970.5) rotate(-45) translate(0,13.5)">Nov-26</text><text x="0" y="0" font-size="19.5" text-anchor="end" fill="#000" transform="translate(1775.4,970.5) rotate(-45) translate(0,13.5)">Jan-27</text><text x="0" y="0" font-size="19.5" text-anchor="end" fill="#000" transform="translate(1818.6,970.5) rotate(-45) translate(0,13.5)">Mar-27</text><text x="0" y="0" font-size="19.5" text-anchor="end" fill="#000" transform="translate(1861.7,970.5) rotate(-45) translate(0,13.5)">May-27</text><text x="0" y="0" font-size="19.5" text-anchor="end" fill="#000" transform="translate(1904.9,970.5) rotate(-45) translate(0,13.5)">Jul-27</text><text x="0" y="0" font-size="19.5" text-anchor="end" fill="#000" transform="translate(1948.0,970.5) rotate(-45) translate(0,13.5)">Sep-27</text><text x="0" y="0" font-size="19.5" text-anchor="end" fill="#000" transform="translate(1991.2,970.5) rotate(-45) translate(0,13.5)">Nov-27</text><text x="0" y="0" font-size="19.5" text-anchor="end" fill="#000" transform="translate(2034.3,970.5) rotate(-45) translate(0,13.5)">Jan-28</text><text x="0" y="0" font-size="19.5" text-anchor="end" fill="#000" transform="translate(2077.5,970.5) rotate(-45) translate(0,13.5)">Mar-28</text><text x="0" y="0" font-size="19.5" text-anchor="end" fill="#000" transform="translate(2120.6,970.5) rotate(-45) translate(0,13.5)">May-28</text><text x="0" y="0" font-size="19.5" text-anchor="end" fill="#000" transform="translate(2163.8,970.5) rotate(-45) translate(0,13.5)">Jul-28</text><text x="0" y="0" font-size="19.5" text-anchor="end" fill="#000" transform="translate(2206.9,970.5) rotate(-45) translate(0,13.5)">Sep-28</text><text x="0" y="0" font-size="19.5" text-anchor="end" fill="#000" transform="translate(2250.1,970.5) rotate(-45) translate(0,13.5)">Nov-28</text><text x="0" y="0" font-size="19.5" text-anchor="end" fill="#000" transform="translate(2293.2,970.5) rotate(-45) translate(0,13.5)">Jan-29</text><text x="0" y="0" font-size="19.5" text-anchor="end" fill="#000" transform="translate(2336.4,970.5) rotate(-45) translate(0,13.5)">Mar-29</text><text x="0" y="0" font-size="19.5" text-anchor="end" fill="#000" transform="translate(2379.6,970.5) rotate(-45) translate(0,13.5)">May-29</text><text x="0" y="0" font-size="19.5" text-anchor="end" fill="#000" transform="translate(2422.7,970.5) rotate(-45) translate(0,13.5)">Jul-29</text><text x="0" y="0" font-size="19.5" text-anchor="end" fill="#000" transform="translate(2465.9,970.5) rotate(-45) translate(0,13.5)">Sep-29</text><text x="0" y="0" font-size="19.5" text-anchor="end" fill="#000" transform="translate(2509.0,970.5) rotate(-45) translate(0,13.5)">Nov-29</text><text x="0" y="0" font-size="19.5" text-anchor="end" fill="#000" transform="translate(2552.2,970.5) rotate(-45) translate(0,13.5)">Jan-30</text><text x="0" y="0" font-size="19.5" text-anchor="end" fill="#000" transform="translate(2595.3,970.5) rotate(-45) translate(0,13.5)">Mar-30</text><text x="0" y="0" font-size="19.5" text-anchor="end" fill="#000" transform="translate(2638.5,970.5) rotate(-45) translate(0,13.5)">May-30</text><text x="0" y="0" font-size="19.5" text-anchor="end" fill="#000" transform="translate(2681.6,970.5) rotate(-45) translate(0,13.5)">Jul-30</text><text x="0" y="0" font-size="19.5" text-anchor="end" fill="#000" transform="translate(2724.8,970.5) rotate(-45) translate(0,13.5)">Sep-30</text><text x="0" y="0" font-size="19.5" text-anchor="end" fill="#000" transform="translate(2767.9,970.5) rotate(-45) translate(0,13.5)">Nov-30</text><line x1="185" y1="1144.5" x2="1315" y2="1144.5" stroke="#5ea6d0" stroke-width="1"/><line x1="185" y1="1213.5" x2="1315" y2="1213.5" stroke="#5ea6d0" stroke-width="1"/><line x1="185" y1="1282.5" x2="1315" y2="1282.5" stroke="#5ea6d0" stroke-width="1"/><line x1="185" y1="1351.5" x2="1315" y2="1351.5" stroke="#5ea6d0" stroke-width="1"/><line x1="185" y1="1419.5" x2="1315" y2="1419.5" stroke="#5ea6d0" stroke-width="1"/><line x1="185" y1="1557.5" x2="1315" y2="1557.5" stroke="#5ea6d0" stroke-width="1"/><rect x="228.00" y="1471.00" width="140.00" height="17.00" fill="#4cb2e6"/><rect x="454.00" y="1488.00" width="140.00" height="17.80" fill="#4cb2e6"/><rect x="680.00" y="1488.00" width="140.00" height="14.50" fill="#4cb2e6"/><rect x="906.00" y="1413.40" width="140.00" height="74.60" fill="#4cb2e6"/><rect x="1132.00" y="1169.00" width="140.00" height="319.00" fill="#4cb2e6"/><line x1="185" y1="1488" x2="1315" y2="1488" stroke="#4062a8" stroke-width="2"/><line x1="185" y1="1487" x2="185" y2="1494" stroke="#4062a8" stroke-width="2"/><line x1="298" y1="1487" x2="298" y2="1494" stroke="#4062a8" stroke-width="2"/><line x1="411" y1="1487" x2="411" y2="1494" stroke="#4062a8" stroke-width="2"/><line x1="524" y1="1487" x2="524" y2="1494" stroke="#4062a8" stroke-width="2"/><line x1="637" y1="1487" x2="637" y2="1494" stroke="#4062a8" stroke-width="2"/><line x1="750" y1="1487" x2="750" y2="1494" stroke="#4062a8" stroke-width="2"/><line x1="863" y1="1487" x2="863" y2="1494" stroke="#4062a8" stroke-width="2"/><line x1="976" y1="1487" x2="976" y2="1494" stroke="#4062a8" stroke-width="2"/><line x1="1089" y1="1487" x2="1089" y2="1494" stroke="#4062a8" stroke-width="2"/><line x1="1202" y1="1487" x2="1202" y2="1494" stroke="#4062a8" stroke-width="2"/><line x1="1315" y1="1487" x2="1315" y2="1494" stroke="#4062a8" stroke-width="2"/><line x1="1530" y1="1147.5" x2="2791.6" y2="1147.5" stroke="#5ea6d0" stroke-width="1"/><line x1="1530" y1="1215.5" x2="2791.6" y2="1215.5" stroke="#5ea6d0" stroke-width="1"/><line x1="1530" y1="1283.5" x2="2791.6" y2="1283.5" stroke="#5ea6d0" stroke-width="1"/><line x1="1530" y1="1351.5" x2="2791.6" y2="1351.5" stroke="#5ea6d0" stroke-width="1"/><line x1="1530" y1="1419.5" x2="2791.6" y2="1419.5" stroke="#5ea6d0" stroke-width="1"/><line x1="1530" y1="1555.5" x2="2791.6" y2="1555.5" stroke="#5ea6d0" stroke-width="1"/><polygon points="1529.70,1487.3 1529.70,1431.09 1551.09,1437.35 1572.48,1436.33 1593.86,1442.93 1615.25,1448.51 1636.64,1453.75 1658.03,1456.75 1679.42,1460.01 1700.81,1463.01 1722.19,1466.27 1743.58,1469.20 1764.97,1472.19 1786.36,1475.80 1807.75,1481.38 1829.13,1485.33 1850.52,1487.30 1871.91,1491.25 1893.30,1493.56 1914.69,1495.53 1936.07,1497.85 1957.46,1499.82 1978.85,1501.79 2000.24,1503.77 2021.63,1505.74 2043.02,1509.35 2064.40,1513.30 2085.79,1516.56 2107.18,1518.53 2128.57,1519.49 2149.96,1519.22 2171.34,1517.85 2192.73,1515.88 2214.12,1513.91 2235.51,1510.98 2256.90,1507.71 2278.28,1503.09 2299.67,1500.23 2321.06,1496.69 2342.45,1492.74 2363.84,1489.07 2385.23,1486.55 2406.61,1478.93 2428.00,1470.02 2449.39,1459.81 2470.78,1449.67 2492.17,1438.24 2513.55,1426.74 2534.94,1414.01 2556.33,1401.28 2577.72,1389.38 2599.11,1374.61 2620.49,1356.78 2641.88,1339.02 2663.27,1319.90 2684.66,1297.03 2706.05,1272.87 2727.44,1249.94 2748.82,1224.49 2770.21,1197.82 2791.60,1172.36 2791.60,1487.3" fill="#4cb2e6"/><line x1="1529.7" y1="1487.3" x2="2791.6" y2="1487.3" stroke="#4062a8" stroke-width="2"/><line x1="1529.7" y1="1486.3" x2="1529.7" y2="1494.8" stroke="#4062a8" stroke-width="1.6"/><line x1="1551.0881355932204" y1="1486.3" x2="1551.0881355932204" y2="1492.3" stroke="#4062a8" stroke-width="1.6"/><line x1="1572.4762711864407" y1="1486.3" x2="1572.4762711864407" y2="1492.3" stroke="#4062a8" stroke-width="1.6"/><line x1="1593.864406779661" y1="1486.3" x2="1593.864406779661" y2="1494.8" stroke="#4062a8" stroke-width="1.6"/><line x1="1615.2525423728814" y1="1486.3" x2="1615.2525423728814" y2="1492.3" stroke="#4062a8" stroke-width="1.6"/><line x1="1636.6406779661017" y1="1486.3" x2="1636.6406779661017" y2="1492.3" stroke="#4062a8" stroke-width="1.6"/><line x1="1658.028813559322" y1="1486.3" x2="1658.028813559322" y2="1494.8" stroke="#4062a8" stroke-width="1.6"/><line x1="1679.4169491525424" y1="1486.3" x2="1679.4169491525424" y2="1492.3" stroke="#4062a8" stroke-width="1.6"/><line x1="1700.8050847457628" y1="1486.3" x2="1700.8050847457628" y2="1492.3" stroke="#4062a8" stroke-width="1.6"/><line x1="1722.193220338983" y1="1486.3" x2="1722.193220338983" y2="1494.8" stroke="#4062a8" stroke-width="1.6"/><line x1="1743.5813559322035" y1="1486.3" x2="1743.5813559322035" y2="1492.3" stroke="#4062a8" stroke-width="1.6"/><line x1="1764.9694915254238" y1="1486.3" x2="1764.9694915254238" y2="1492.3" stroke="#4062a8" stroke-width="1.6"/><line x1="1786.3576271186441" y1="1486.3" x2="1786.3576271186441" y2="1494.8" stroke="#4062a8" stroke-width="1.6"/><line x1="1807.7457627118645" y1="1486.3" x2="1807.7457627118645" y2="1492.3" stroke="#4062a8" stroke-width="1.6"/><line x1="1829.1338983050848" y1="1486.3" x2="1829.1338983050848" y2="1492.3" stroke="#4062a8" stroke-width="1.6"/><line x1="1850.5220338983052" y1="1486.3" x2="1850.5220338983052" y2="1494.8" stroke="#4062a8" stroke-width="1.6"/><line x1="1871.9101694915255" y1="1486.3" x2="1871.9101694915255" y2="1492.3" stroke="#4062a8" stroke-width="1.6"/><line x1="1893.2983050847458" y1="1486.3" x2="1893.2983050847458" y2="1492.3" stroke="#4062a8" stroke-width="1.6"/><line x1="1914.6864406779662" y1="1486.3" x2="1914.6864406779662" y2="1494.8" stroke="#4062a8" stroke-width="1.6"/><line x1="1936.0745762711865" y1="1486.3" x2="1936.0745762711865" y2="1492.3" stroke="#4062a8" stroke-width="1.6"/><line x1="1957.4627118644069" y1="1486.3" x2="1957.4627118644069" y2="1492.3" stroke="#4062a8" stroke-width="1.6"/><line x1="1978.8508474576272" y1="1486.3" x2="1978.8508474576272" y2="1494.8" stroke="#4062a8" stroke-width="1.6"/><line x1="2000.2389830508475" y1="1486.3" x2="2000.2389830508475" y2="1492.3" stroke="#4062a8" stroke-width="1.6"/><line x1="2021.6271186440679" y1="1486.3" x2="2021.6271186440679" y2="1492.3" stroke="#4062a8" stroke-width="1.6"/><line x1="2043.015254237288" y1="1486.3" x2="2043.015254237288" y2="1494.8" stroke="#4062a8" stroke-width="1.6"/><line x1="2064.4033898305083" y1="1486.3" x2="2064.4033898305083" y2="1492.3" stroke="#4062a8" stroke-width="1.6"/><line x1="2085.7915254237287" y1="1486.3" x2="2085.7915254237287" y2="1492.3" stroke="#4062a8" stroke-width="1.6"/><line x1="2107.179661016949" y1="1486.3" x2="2107.179661016949" y2="1494.8" stroke="#4062a8" stroke-width="1.6"/><line x1="2128.5677966101694" y1="1486.3" x2="2128.5677966101694" y2="1492.3" stroke="#4062a8" stroke-width="1.6"/><line x1="2149.9559322033897" y1="1486.3" x2="2149.9559322033897" y2="1492.3" stroke="#4062a8" stroke-width="1.6"/><line x1="2171.34406779661" y1="1486.3" x2="2171.34406779661" y2="1494.8" stroke="#4062a8" stroke-width="1.6"/><line x1="2192.7322033898304" y1="1486.3" x2="2192.7322033898304" y2="1492.3" stroke="#4062a8" stroke-width="1.6"/><line x1="2214.1203389830507" y1="1486.3" x2="2214.1203389830507" y2="1492.3" stroke="#4062a8" stroke-width="1.6"/><line x1="2235.508474576271" y1="1486.3" x2="2235.508474576271" y2="1494.8" stroke="#4062a8" stroke-width="1.6"/><line x1="2256.8966101694914" y1="1486.3" x2="2256.8966101694914" y2="1492.3" stroke="#4062a8" stroke-width="1.6"/><line x1="2278.2847457627117" y1="1486.3" x2="2278.2847457627117" y2="1492.3" stroke="#4062a8" stroke-width="1.6"/><line x1="2299.672881355932" y1="1486.3" x2="2299.672881355932" y2="1494.8" stroke="#4062a8" stroke-width="1.6"/><line x1="2321.0610169491524" y1="1486.3" x2="2321.0610169491524" y2="1492.3" stroke="#4062a8" stroke-width="1.6"/><line x1="2342.4491525423728" y1="1486.3" x2="2342.4491525423728" y2="1492.3" stroke="#4062a8" stroke-width="1.6"/><line x1="2363.837288135593" y1="1486.3" x2="2363.837288135593" y2="1494.8" stroke="#4062a8" stroke-width="1.6"/><line x1="2385.2254237288134" y1="1486.3" x2="2385.2254237288134" y2="1492.3" stroke="#4062a8" stroke-width="1.6"/><line x1="2406.613559322034" y1="1486.3" x2="2406.613559322034" y2="1492.3" stroke="#4062a8" stroke-width="1.6"/><line x1="2428.001694915254" y1="1486.3" x2="2428.001694915254" y2="1494.8" stroke="#4062a8" stroke-width="1.6"/><line x1="2449.3898305084745" y1="1486.3" x2="2449.3898305084745" y2="1492.3" stroke="#4062a8" stroke-width="1.6"/><line x1="2470.777966101695" y1="1486.3" x2="2470.777966101695" y2="1492.3" stroke="#4062a8" stroke-width="1.6"/><line x1="2492.166101694915" y1="1486.3" x2="2492.166101694915" y2="1494.8" stroke="#4062a8" stroke-width="1.6"/><line x1="2513.5542372881355" y1="1486.3" x2="2513.5542372881355" y2="1492.3" stroke="#4062a8" stroke-width="1.6"/><line x1="2534.942372881356" y1="1486.3" x2="2534.942372881356" y2="1492.3" stroke="#4062a8" stroke-width="1.6"/><line x1="2556.330508474576" y1="1486.3" x2="2556.330508474576" y2="1494.8" stroke="#4062a8" stroke-width="1.6"/><line x1="2577.7186440677965" y1="1486.3" x2="2577.7186440677965" y2="1492.3" stroke="#4062a8" stroke-width="1.6"/><line x1="2599.106779661017" y1="1486.3" x2="2599.106779661017" y2="1492.3" stroke="#4062a8" stroke-width="1.6"/><line x1="2620.494915254237" y1="1486.3" x2="2620.494915254237" y2="1494.8" stroke="#4062a8" stroke-width="1.6"/><line x1="2641.8830508474575" y1="1486.3" x2="2641.8830508474575" y2="1492.3" stroke="#4062a8" stroke-width="1.6"/><line x1="2663.271186440678" y1="1486.3" x2="2663.271186440678" y2="1492.3" stroke="#4062a8" stroke-width="1.6"/><line x1="2684.659322033898" y1="1486.3" x2="2684.659322033898" y2="1494.8" stroke="#4062a8" stroke-width="1.6"/><line x1="2706.0474576271185" y1="1486.3" x2="2706.0474576271185" y2="1492.3" stroke="#4062a8" stroke-width="1.6"/><line x1="2727.435593220339" y1="1486.3" x2="2727.435593220339" y2="1492.3" stroke="#4062a8" stroke-width="1.6"/><line x1="2748.8237288135592" y1="1486.3" x2="2748.8237288135592" y2="1494.8" stroke="#4062a8" stroke-width="1.6"/><line x1="2770.2118644067796" y1="1486.3" x2="2770.2118644067796" y2="1492.3" stroke="#4062a8" stroke-width="1.6"/><line x1="2791.6" y1="1486.3" x2="2791.6" y2="1492.3" stroke="#4062a8" stroke-width="1.6"/><text x="0" y="0" font-size="19.5" text-anchor="end" fill="#000" transform="translate(1527.7,1571) rotate(-45) translate(0,13.5)">Jan-26</text><text x="0" y="0" font-size="19.5" text-anchor="end" fill="#000" transform="translate(1591.9,1571) rotate(-45) translate(0,13.5)">Apr-26</text><text x="0" y="0" font-size="19.5" text-anchor="end" fill="#000" transform="translate(1656.0,1571) rotate(-45) translate(0,13.5)">Jul-26</text><text x="0" y="0" font-size="19.5" text-anchor="end" fill="#000" transform="translate(1720.2,1571) rotate(-45) translate(0,13.5)">Oct-26</text><text x="0" y="0" font-size="19.5" text-anchor="end" fill="#000" transform="translate(1784.4,1571) rotate(-45) translate(0,13.5)">Jan-27</text><text x="0" y="0" font-size="19.5" text-anchor="end" fill="#000" transform="translate(1848.5,1571) rotate(-45) translate(0,13.5)">Apr-27</text><text x="0" y="0" font-size="19.5" text-anchor="end" fill="#000" transform="translate(1912.7,1571) rotate(-45) translate(0,13.5)">Jul-27</text><text x="0" y="0" font-size="19.5" text-anchor="end" fill="#000" transform="translate(1976.9,1571) rotate(-45) translate(0,13.5)">Oct-27</text><text x="0" y="0" font-size="19.5" text-anchor="end" fill="#000" transform="translate(2041.0,1571) rotate(-45) translate(0,13.5)">Jan-28</text><text x="0" y="0" font-size="19.5" text-anchor="end" fill="#000" transform="translate(2105.2,1571) rotate(-45) translate(0,13.5)">Apr-28</text><text x="0" y="0" font-size="19.5" text-anchor="end" fill="#000" transform="translate(2169.3,1571) rotate(-45) translate(0,13.5)">Jul-28</text><text x="0" y="0" font-size="19.5" text-anchor="end" fill="#000" transform="translate(2233.5,1571) rotate(-45) translate(0,13.5)">Oct-28</text><text x="0" y="0" font-size="19.5" text-anchor="end" fill="#000" transform="translate(2297.7,1571) rotate(-45) translate(0,13.5)">Jan-29</text><text x="0" y="0" font-size="19.5" text-anchor="end" fill="#000" transform="translate(2361.8,1571) rotate(-45) translate(0,13.5)">Apr-29</text><text x="0" y="0" font-size="19.5" text-anchor="end" fill="#000" transform="translate(2426.0,1571) rotate(-45) translate(0,13.5)">Jul-29</text><text x="0" y="0" font-size="19.5" text-anchor="end" fill="#000" transform="translate(2490.2,1571) rotate(-45) translate(0,13.5)">Oct-29</text><text x="0" y="0" font-size="19.5" text-anchor="end" fill="#000" transform="translate(2554.3,1571) rotate(-45) translate(0,13.5)">Jan-30</text><text x="0" y="0" font-size="19.5" text-anchor="end" fill="#000" transform="translate(2618.5,1571) rotate(-45) translate(0,13.5)">Apr-30</text><text x="0" y="0" font-size="19.5" text-anchor="end" fill="#000" transform="translate(2682.7,1571) rotate(-45) translate(0,13.5)">Jul-30</text><text x="0" y="0" font-size="19.5" text-anchor="end" fill="#000" transform="translate(2746.8,1571) rotate(-45) translate(0,13.5)">Oct-30</text></svg>
<div class="a" style="left:2860px;top:278px;width:31px;height:1392px;background:#141414"></div>
<svg class="a" style="left:2868px;top:284px" width="16" height="13" viewBox="0 0 16 13"><path d="M8 1.5 L15 11.5 H1 Z" fill="#9a9a9a" stroke="#9a9a9a" stroke-width="1.5" stroke-linejoin="round"/></svg>
<div class="a" style="left:2870px;top:304px;width:12px;height:661px;background:#9a9a9a;border-radius:6px"></div>
<svg class="a" style="left:2868px;top:1651px" width="16" height="13" viewBox="0 0 16 13"><path d="M8 11.5 L15 1.5 H1 Z" fill="#9a9a9a" stroke="#9a9a9a" stroke-width="1.5" stroke-linejoin="round"/></svg>
<div class="a" style="left:11px;top:1670px;width:2880px;height:48px;background:#0c0c0c"></div>
<div class="a" style="left:11px;top:1717.5px;width:2880px;height:1px;background:#2e2e2e"></div>
<svg class="a" style="left:44px;top:1684px" width="13" height="18" viewBox="0 0 13 18"><path d="M10 1.5 L3 9 L10 16.5" stroke="#9a9a9a" stroke-width="1.6" fill="none"/></svg>
<svg class="a" style="left:93px;top:1684px" width="13" height="18" viewBox="0 0 13 18"><path d="M3 1.5 L10 9 L3 16.5" stroke="#e6e6e6" stroke-width="1.6" fill="none"/></svg>
<div class="t" style="left:190.5px;top:1686.1px;font-size:20px;color:#fff;font-weight:400;letter-spacing:0.3px">Contents</div>
<div class="a" style="left:299px;top:1676.5px;width:128px;height:35px;background:#fcee6e;border-radius:6px"></div>
<div class="t" style="left:-137.0px;width:1000px;text-align:center;top:1686.1px;font-size:20px;color:#000;font-weight:400;letter-spacing:0.1px">Dashboard</div>
<div class="a" style="left:440px;top:1676.5px;width:106px;height:35px;background:#fcee6e;border-radius:6px"></div>
<div class="t" style="left:-7.0px;width:1000px;text-align:center;top:1686.1px;font-size:20px;color:#000;font-weight:400;letter-spacing:0.1px">Revenue</div>
<div class="a" style="left:559px;top:1676.5px;width:158px;height:35px;background:#fcee6e;border-radius:6px"></div>
<div class="t" style="left:138.0px;width:1000px;text-align:center;top:1686.1px;font-size:20px;color:#000;font-weight:400;letter-spacing:0.1px">COGS &amp; OPEX</div>
<div class="a" style="left:730px;top:1676.5px;width:88px;height:35px;background:#fcee6e;border-radius:6px"></div>
<div class="t" style="left:274.0px;width:1000px;text-align:center;top:1686.1px;font-size:20px;color:#000;font-weight:400;letter-spacing:0.1px">Payroll</div>
<div class="a" style="left:832px;top:1676.5px;width:87px;height:35px;background:#fcee6e;border-radius:6px"></div>
<div class="t" style="left:375.5px;width:1000px;text-align:center;top:1686.1px;font-size:20px;color:#000;font-weight:400;letter-spacing:0.1px">CAPEX</div>
<div class="a" style="left:932px;top:1676.5px;width:113px;height:35px;background:#fcee6e;border-radius:6px"></div>
<div class="t" style="left:488.5px;width:1000px;text-align:center;top:1686.1px;font-size:20px;color:#000;font-weight:400;letter-spacing:0.1px">CapTable</div>
<div class="a" style="left:1058px;top:1676.5px;width:90px;height:35px;background:#fcee6e;border-radius:6px"></div>
<div class="t" style="left:603.0px;width:1000px;text-align:center;top:1686.1px;font-size:20px;color:#000;font-weight:400;letter-spacing:0.1px">Capital</div>
<div class="a" style="left:1161px;top:1676.5px;width:42px;height:35px;background:#4cb2e6;border-radius:6px"></div>
<div class="t" style="left:682.0px;width:1000px;text-align:center;top:1686.1px;font-size:20px;color:#000;font-weight:400;letter-spacing:0.1px">IS</div>
<div class="a" style="left:1216px;top:1676.5px;width:48px;height:35px;background:#4cb2e6;border-radius:6px"></div>
<div class="t" style="left:740.0px;width:1000px;text-align:center;top:1686.1px;font-size:20px;color:#000;font-weight:400;letter-spacing:0.1px">CF</div>
<div class="a" style="left:1277px;top:1676.5px;width:48px;height:35px;background:#4cb2e6;border-radius:6px"></div>
<div class="t" style="left:801.0px;width:1000px;text-align:center;top:1686.1px;font-size:20px;color:#000;font-weight:400;letter-spacing:0.1px">BS</div>
<div class="a" style="left:1338px;top:1676.5px;width:115px;height:35px;background:#4cb2e6;border-radius:6px"></div>
<div class="t" style="left:895.5px;width:1000px;text-align:center;top:1686.1px;font-size:20px;color:#000;font-weight:400;letter-spacing:0.1px">Scenarios</div>
<div class="a" style="left:1466px;top:1676.5px;width:115px;height:35px;background:#4cb2e6;border-radius:6px"></div>
<div class="t" style="left:1023.5px;width:1000px;text-align:center;top:1686.1px;font-size:20px;color:#000;font-weight:400;letter-spacing:0.1px">Valuation</div>
<div class="a" style="left:1594px;top:1676.5px;width:114px;height:35px;background:#4cb2e6;border-radius:6px"></div>
<div class="t" style="left:1151.0px;width:1000px;text-align:center;top:1686.1px;font-size:20px;color:#000;font-weight:400;letter-spacing:0.1px">Summary</div>
<div class="a" style="left:1721px;top:1676.5px;width:48px;height:35px;background:#4cb2e6;border-radius:6px"></div>
<div class="t" style="left:1245.0px;width:1000px;text-align:center;top:1686.1px;font-size:20px;color:#000;font-weight:400;letter-spacing:0.1px">BE</div>
<div class="a" style="left:1782px;top:1676.5px;width:72px;height:35px;background:#4cb2e6;border-radius:6px"></div>
<div class="t" style="left:1318.0px;width:1000px;text-align:center;top:1686.1px;font-size:20px;color:#000;font-weight:400;letter-spacing:0.1px">ROIC</div>
<div class="a" style="left:292px;top:1680px;width:1px;height:28px;background:#505050"></div>
<div class="a" style="left:433.5px;top:1680px;width:1px;height:28px;background:#505050"></div>
<div class="a" style="left:552.5px;top:1680px;width:1px;height:28px;background:#505050"></div>
<div class="a" style="left:723.5px;top:1680px;width:1px;height:28px;background:#505050"></div>
<div class="a" style="left:824.5px;top:1680px;width:1px;height:28px;background:#505050"></div>
<div class="a" style="left:925.5px;top:1680px;width:1px;height:28px;background:#505050"></div>
<div class="a" style="left:1051.5px;top:1680px;width:1px;height:28px;background:#505050"></div>
<div class="a" style="left:1154.5px;top:1680px;width:1px;height:28px;background:#505050"></div>
<div class="a" style="left:1209.5px;top:1680px;width:1px;height:28px;background:#505050"></div>
<div class="a" style="left:1270.5px;top:1680px;width:1px;height:28px;background:#505050"></div>
<div class="a" style="left:1331.5px;top:1680px;width:1px;height:28px;background:#505050"></div>
<div class="a" style="left:1459.5px;top:1680px;width:1px;height:28px;background:#505050"></div>
<div class="a" style="left:1587.5px;top:1680px;width:1px;height:28px;background:#505050"></div>
<div class="a" style="left:1714.5px;top:1680px;width:1px;height:28px;background:#505050"></div>
<div class="a" style="left:1775.5px;top:1680px;width:1px;height:28px;background:#505050"></div>
<div class="a" style="left:1860.5px;top:1680px;width:1px;height:28px;background:#505050"></div>
<div class="a" style="left:1958.5px;top:1680px;width:1px;height:28px;background:#505050"></div>
<div class="a" style="left:2035.5px;top:1680px;width:1px;height:28px;background:#505050"></div>
<div class="a" style="left:1867px;top:1670.5px;width:85px;height:41.2px;background:linear-gradient(#ffffff,#d4e7f5);border-radius:0 0 7px 7px"></div>
<div class="t" style="left:1880px;top:1681.1px;font-size:20px;color:#1d2833;font-weight:400;letter-spacing:0.2px">Charts</div>
<div class="a" style="left:1879.5px;top:1705px;width:60.5px;height:2.6px;background:#1e8a4a"></div>
<div class="a" style="left:1965px;top:1676.5px;width:64px;height:35px;background:#4cb2e6;border-radius:6px"></div>
<div class="t" style="left:1497px;width:1000px;text-align:center;top:1686.1px;font-size:20px;color:#000;font-weight:400;">KPIs</div>
<div class="a" style="left:2042px;top:1676.5px;width:30px;height:35px;background:#4cb2e6;border-radius:6px 0 0 6px;overflow:hidden"><div class="t" style="left:13px;top:9.6px;font-size:20px;color:#000">Sc</div></div>
<div class="a" style="left:2072px;top:1672px;width:14px;height:45px;background:#0c0c0c"></div>
<div class="a" style="left:2087.1px;top:1690.5px;width:4.8px;height:4.8px;background:#e6e6e6;border-radius:50%"></div>
<div class="a" style="left:2093.1px;top:1690.5px;width:4.8px;height:4.8px;background:#e6e6e6;border-radius:50%"></div>
<div class="a" style="left:2099.1px;top:1690.5px;width:4.8px;height:4.8px;background:#e6e6e6;border-radius:50%"></div>
<div class="a" style="left:2134.5px;top:1691.5px;width:18px;height:1.8px;background:#e6e6e6"></div>
<div class="a" style="left:2142.6px;top:1683.5px;width:1.8px;height:18px;background:#e6e6e6"></div>
<div class="a" style="left:2190.5px;top:1685.5px;width:4px;height:4px;background:#e6e6e6"></div>
<div class="a" style="left:2190.5px;top:1691px;width:4px;height:4px;background:#e6e6e6"></div>
<div class="a" style="left:2190.5px;top:1697.5px;width:4px;height:4px;background:#e6e6e6"></div>
<div class="a" style="left:2216px;top:1680.5px;width:644px;height:26.5px;background:#1a1a1a;border-radius:13px"></div>
<svg class="a" style="left:2223px;top:1686px" width="12" height="15" viewBox="0 0 12 15"><path d="M1.5 7.5 L10.5 1.5 V13.5 Z" fill="#9a9a9a" stroke="#9a9a9a" stroke-linejoin="round"/></svg>
<div class="a" style="left:2242px;top:1687px;width:560px;height:12.8px;background:#9a9a9a;border-radius:6.4px"></div>
<svg class="a" style="left:2844px;top:1686px" width="12" height="15" viewBox="0 0 12 15"><path d="M10.5 7.5 L1.5 1.5 V13.5 Z" fill="#9a9a9a" stroke="#9a9a9a" stroke-linejoin="round"/></svg>
<div class="a" style="left:11px;top:1718.5px;width:2880px;height:32.5px;background:#141414"></div>
<div class="t" style="left:27.5px;top:1727.5px;font-size:16.5px;color:#f0f0f0;font-weight:400;letter-spacing:-0.2px">Ready</div>
<svg class="a" style="left:98px;top:1725px" width="24" height="22" viewBox="0 0 24 22"><rect x="1" y="1" width="20" height="18" stroke="#e6e6e6" stroke-width="1.6" fill="none"/><path d="M1 5 H21 M4 9 H9 M4 12 H9 M4 15 H9" stroke="#e6e6e6" stroke-width="1.4"/><circle cx="15" cy="14" r="6" fill="#141414" stroke="#e6e6e6" stroke-width="1.6"/><circle cx="15" cy="14" r="2.8" fill="#e6e6e6"/></svg>
<svg class="a" style="left:145px;top:1723px" width="24" height="24" viewBox="0 0 24 24"><circle cx="10" cy="3.5" r="2.5" stroke="#e6e6e6" stroke-width="1.5" fill="none"/><path d="M2 7 Q10 11 18 7 M10 9 V15 L6 22 M10 15 L13 19" stroke="#e6e6e6" stroke-width="1.6" fill="none" stroke-linecap="round"/><path d="M14 16 L22 23 M22 16 L14 23" stroke="#e6e6e6" stroke-width="1.5"/></svg>
<div class="t" style="left:173px;top:1727.5px;font-size:16.5px;color:#f0f0f0;font-weight:700;">Accessibility: Investigate</div>
<div class="a" style="left:2445.5px;top:1719px;width:60px;height:31px;background:#262626"></div>
<svg class="a" style="left:2463px;top:1724px" width="22" height="21" viewBox="0 0 22 21"><rect x="1" y="1" width="20" height="19" stroke="#e6e6e6" stroke-width="1.5" fill="none"/><path d="M1 7.3 H21 M1 13.6 H21 M7.6 1 V20 M14.3 1 V20" stroke="#e6e6e6" stroke-width="1.4"/></svg>
<svg class="a" style="left:2523px;top:1724px" width="24" height="21" viewBox="0 0 24 21"><rect x="1" y="1" width="22" height="19" stroke="#e6e6e6" stroke-width="1.5" fill="none"/><rect x="6" y="4" width="12" height="13" stroke="#e6e6e6" stroke-width="1.4" fill="none"/><path d="M8.5 8 H15.5 M8.5 11 H15.5 M8.5 14 H15.5" stroke="#e6e6e6" stroke-width="1.2"/></svg>
<svg class="a" style="left:2583px;top:1724px" width="24" height="21" viewBox="0 0 24 21"><rect x="1" y="1" width="22" height="19" stroke="#e6e6e6" stroke-width="1.5" fill="none"/><path d="M9 1 V11 H16 V1" stroke="#e6e6e6" stroke-width="1.5" fill="none"/></svg>
<div class="a" style="left:2632px;top:1733.5px;width:13px;height:1.5px;background:#d0d0d0"></div>
<div class="a" style="left:2653px;top:1733.5px;width:148px;height:1.3px;background:#9a9a9a"></div>
<div class="a" style="left:2725.5px;top:1725.5px;width:9px;height:18px;background:#b5b5b5;border-radius:1px"></div>
<div class="a" style="left:2808.5px;top:1733.5px;width:13px;height:1.5px;background:#d0d0d0"></div>
<div class="a" style="left:2814.3px;top:1727.8px;width:1.5px;height:13px;background:#d0d0d0"></div>
<div class="t" style="left:2839.5px;top:1727.6px;font-size:17px;color:#f0f0f0;font-weight:400;">110%</div></body></html>
